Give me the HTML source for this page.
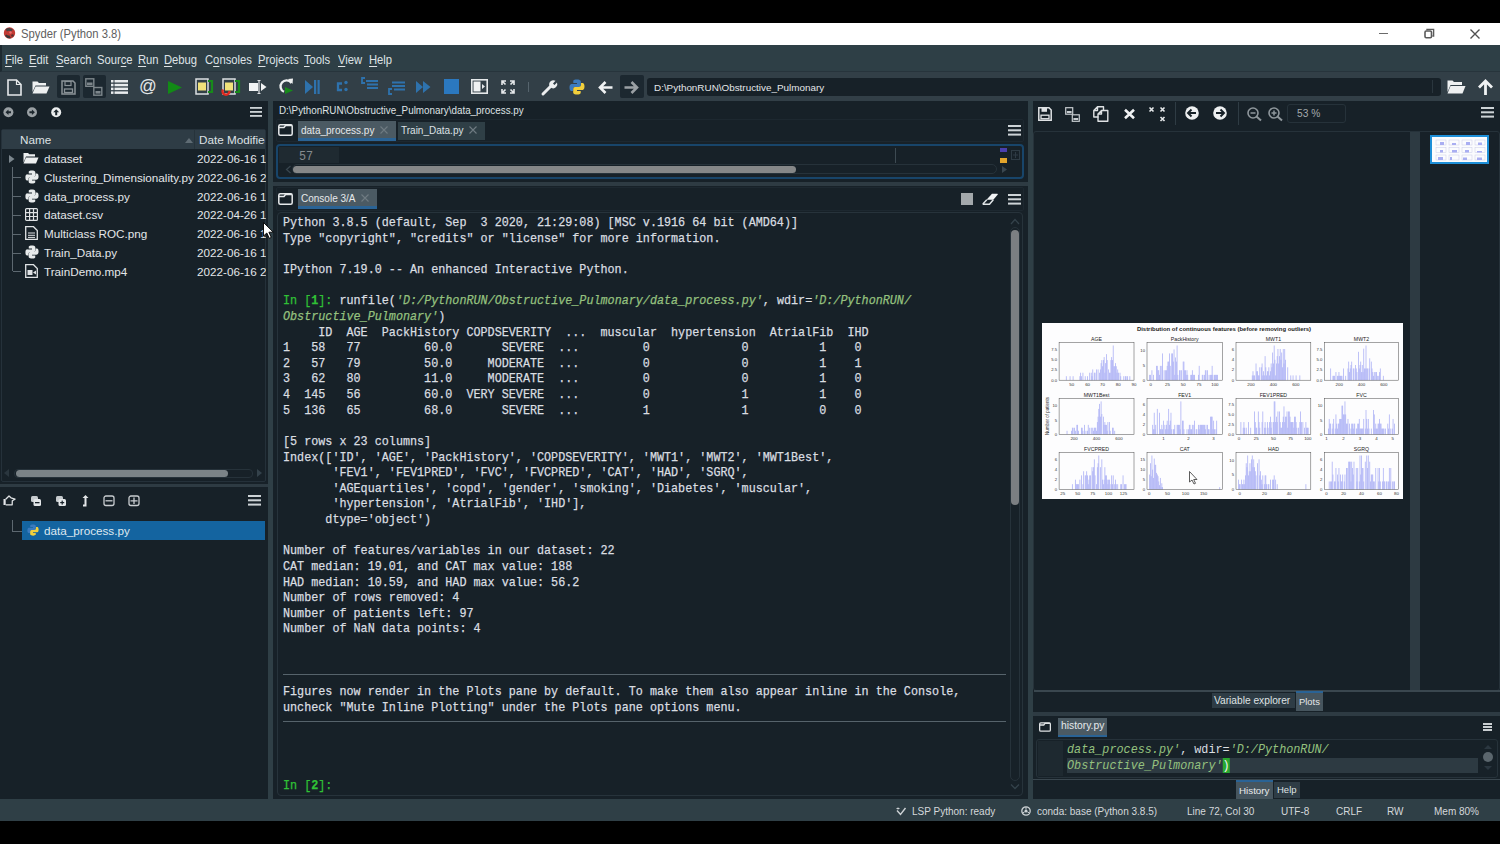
<!DOCTYPE html>
<html><head><meta charset="utf-8">
<style>
*{margin:0;padding:0;box-sizing:border-box}
html,body{width:1500px;height:844px;overflow:hidden;background:#000}
body{position:relative;font-family:"Liberation Sans",sans-serif;color:#e0e3e5}
.a{position:absolute}
.t{position:absolute;white-space:pre;line-height:1}
.m{font-family:"Liberation Mono",monospace}
svg{position:absolute;overflow:visible}
.u{text-decoration:underline;text-underline-offset:2px}
.menu{top:53.5px;font-size:12.8px;color:#dfe3e6;transform:scaleX(0.878);transform-origin:0 0}
.con{position:absolute;left:283px;white-space:pre;font-family:"Liberation Mono",monospace;font-size:13.4px;line-height:15.62px;color:#dadee1;transform:scaleX(0.878);transform-origin:0 0;-webkit-text-stroke:0.25px currentColor}
.g{color:#30c236}
.gb{color:#30c236;font-weight:bold}
.s{color:#95c17f;font-style:italic}
.tree{font-size:11.7px;color:#e3e6e8}
.sb{font-size:10.5px;color:#dfe2e4;top:805px}
</style></head><body><div id="wrap" style="position:absolute;left:0;top:0;width:1500px;height:844px">
<!-- ===== title bar ===== -->
<div class="a" style="left:0;top:23px;width:1500px;height:22px;background:#fff"></div>
<svg style="left:3px;top:27px" width="13" height="12" viewBox="0 0 13 12"><circle cx="6.5" cy="6" r="5.7" fill="#c23a33"/><path d="M2.5 2.2Q6 -0.5 10 2.5L8 4.5Q6 3 4 4.5Z" fill="#4a4444"/><path d="M2 8.5Q4 12 8 11.2L6.5 8.5Q4.5 8.8 3.5 7.5Z" fill="#3a3838"/><circle cx="9.5" cy="8.5" r="1.3" fill="#5a3030"/><circle cx="7.5" cy="5.5" r="1.2" fill="#e87070"/></svg>
<div class="t" style="left:21px;top:28px;font-size:12.5px;color:#606060;transform:scaleX(0.9);transform-origin:0 0">Spyder (Python 3.8)</div>
<div class="a" style="left:1379px;top:32.5px;width:9px;height:1.6px;background:#6a6a6a"></div>
<svg style="left:1424px;top:28px" width="11" height="11" viewBox="0 0 11 11"><rect x="1" y="3" width="6.5" height="6.8" rx="1.2" fill="none" stroke="#5a5a5a" stroke-width="1.6"/><path d="M3 2.2V1.4H9.6V8H8.4" fill="none" stroke="#5a5a5a" stroke-width="1.4"/></svg>
<svg style="left:1470px;top:29px" width="10" height="10" viewBox="0 0 10 10"><path d="M0.5 0.5L9.5 9.5M9.5 0.5L0.5 9.5" stroke="#505050" stroke-width="1.4"/></svg>

<!-- ===== menu bar ===== -->
<div class="a" style="left:0;top:45px;width:1500px;height:27px;background:#2e3f46;border-left:2px solid #1e2a31;border-bottom:1px solid #27343c"></div>
<div class="t menu" style="left:5px"><span class="u">F</span>ile</div>
<div class="t menu" style="left:29px"><span class="u">E</span>dit</div>
<div class="t menu" style="left:56px"><span class="u">S</span>earch</div>
<div class="t menu" style="left:97px">Sour<span class="u">c</span>e</div>
<div class="t menu" style="left:138px"><span class="u">R</span>un</div>
<div class="t menu" style="left:164px"><span class="u">D</span>ebug</div>
<div class="t menu" style="left:205px">C<span class="u">o</span>nsoles</div>
<div class="t menu" style="left:258px"><span class="u">P</span>rojects</div>
<div class="t menu" style="left:304px"><span class="u">T</span>ools</div>
<div class="t menu" style="left:338px"><span class="u">V</span>iew</div>
<div class="t menu" style="left:369px"><span class="u">H</span>elp</div>

<!-- ===== toolbar ===== -->
<div class="a" style="left:0;top:72px;width:1500px;height:29px;background:#323f47"></div>
<!-- new file -->
<svg style="left:7px;top:79px" width="15" height="17" viewBox="0 0 15 17"><path d="M1 1H9.5L14 5.5V16H1Z" fill="none" stroke="#e6e9eb" stroke-width="1.6"/><path d="M9.5 1V5.5H14" fill="none" stroke="#e6e9eb" stroke-width="1.2"/></svg>
<!-- open -->
<svg style="left:32px;top:80px" width="18" height="14" viewBox="0 0 18 14"><path d="M0.5 1.5H5.5L7 3H14V5.5H3.5L0.5 12Z" fill="#eef0f1"/><path d="M3.5 6.5H17.5L14.5 13.5H0.5Z" fill="#eef0f1"/></svg>
<!-- save buttons (pressed bg) -->
<div class="a" style="left:57px;top:75px;width:23px;height:23px;background:#1c2830;border-radius:2px"></div>
<div class="a" style="left:83px;top:75px;width:23px;height:23px;background:#1c2830;border-radius:2px"></div>
<svg style="left:61px;top:80px" width="15" height="15" viewBox="0 0 15 15"><path d="M1 1H12L14 3V14H1Z" fill="none" stroke="#8a9297" stroke-width="1.5"/><rect x="4" y="1.5" width="6" height="4" fill="none" stroke="#8a9297" stroke-width="1.2"/><rect x="3.5" y="9" width="8" height="3.5" fill="none" stroke="#8a9297" stroke-width="1.3"/></svg>
<svg style="left:85px;top:78px" width="18" height="18" viewBox="0 0 18 18"><rect x="0.8" y="0.8" width="8" height="7.5" fill="none" stroke="#7d868b" stroke-width="1.4"/><rect x="2" y="4.5" width="5.5" height="2.5" fill="#7d868b"/><rect x="8.8" y="9.5" width="8" height="7.7" fill="none" stroke="#7d868b" stroke-width="1.4"/><rect x="10.5" y="13" width="5" height="2.6" fill="#7d868b"/></svg>
<!-- list -->
<svg style="left:111px;top:80px" width="17" height="14" viewBox="0 0 17 14"><g fill="#e9ecee"><rect x="0" y="0" width="2.5" height="2.5"/><rect x="3.5" y="0" width="13.5" height="2.5"/><rect x="0" y="3.8" width="2.5" height="2.5"/><rect x="3.5" y="3.8" width="13.5" height="2.5"/><rect x="0" y="7.6" width="2.5" height="2.5"/><rect x="3.5" y="7.6" width="13.5" height="2.5"/><rect x="0" y="11.4" width="2.5" height="2.5"/><rect x="3.5" y="11.4" width="13.5" height="2.5"/></g></svg>
<!-- @ -->
<div class="t" style="left:139px;top:78px;font-size:17.5px;color:#e3e6e8">@</div>
<!-- run -->
<svg style="left:168px;top:81px" width="14" height="13" viewBox="0 0 14 13"><path d="M0 0L14 6.5L0 13Z" fill="#128a16"/></svg>
<!-- run cell -->
<svg style="left:195px;top:78px" width="18" height="17" viewBox="0 0 18 17"><rect x="1" y="1" width="12" height="15" fill="none" stroke="#dde1e3" stroke-width="1.5"/><rect x="3" y="4.5" width="8" height="8" fill="#f0e27a"/><path d="M13 3H17V14H13" fill="none" stroke="#178a1a" stroke-width="2.2"/></svg>
<!-- run cell advance -->
<svg style="left:222px;top:78px" width="18" height="17" viewBox="0 0 18 17"><rect x="1" y="1" width="12" height="15" fill="none" stroke="#dde1e3" stroke-width="1.5"/><rect x="3" y="4.5" width="8" height="8" fill="#f0e27a"/><path d="M13 3H17V14H13" fill="none" stroke="#178a1a" stroke-width="2.2"/><path d="M1 11.5A3.5 3.5 0 1 0 7.5 13" fill="none" stroke="#e02b20" stroke-width="2.4"/></svg>
<!-- run selection -->
<svg style="left:249px;top:80px" width="18" height="14" viewBox="0 0 18 14"><rect x="0" y="3" width="9" height="8" fill="#f2f4f5"/><path d="M10 0.5V13.5M8.5 0.5H11.5M8.5 13.5H11.5" stroke="#dfe2e4" stroke-width="1.2"/><path d="M12 3L17.5 7L12 11Z" fill="#f2f4f5"/></svg>
<!-- rerun -->
<svg style="left:278px;top:78px" width="17" height="16" viewBox="0 0 17 16"><path d="M13.5 5A6 6 0 1 0 6 13.8" fill="none" stroke="#eef0f1" stroke-width="2.3"/><path d="M10 1L15 0.5L14.5 6Z" fill="#eef0f1"/><path d="M7 9L15 12.5L7 16Z" fill="#178a1a"/></svg>
<!-- debug -->
<svg style="left:305px;top:80px" width="15" height="14" viewBox="0 0 15 14"><path d="M0 0L8 7L0 14Z" fill="#2e72ad"/><rect x="9" y="0" width="2.2" height="14" fill="#2e72ad"/><rect x="12.5" y="0" width="2.2" height="14" fill="#2e72ad"/></svg>
<!-- c: -->
<svg style="left:336px;top:80px" width="12" height="12" viewBox="0 0 12 12"><path d="M6 3.5H2V10H6" fill="none" stroke="#2e72ad" stroke-width="2.3"/><circle cx="10" cy="2.5" r="1.7" fill="#2e72ad"/><circle cx="10" cy="9.5" r="1.7" fill="#2e72ad"/></svg>
<!-- c= sup -->
<svg style="left:361px;top:77px" width="17" height="14" viewBox="0 0 17 14"><path d="M4 1H1V6H4" fill="none" stroke="#2e72ad" stroke-width="1.8"/><g fill="#2e72ad"><rect x="5" y="3" width="12" height="2"/><rect x="6" y="6.5" width="11" height="2"/><rect x="6" y="10" width="11" height="2"/></g></svg>
<!-- c= sub -->
<svg style="left:388px;top:81px" width="17" height="14" viewBox="0 0 17 14"><path d="M4 8H1V13H4" fill="none" stroke="#2e72ad" stroke-width="1.8"/><g fill="#2e72ad"><rect x="4" y="0.5" width="13" height="2"/><rect x="4" y="4" width="13" height="2"/><rect x="6" y="7.5" width="11" height="2"/></g></svg>
<!-- >> -->
<svg style="left:416px;top:81px" width="15" height="12" viewBox="0 0 15 12"><path d="M0 0L7 6L0 12Z M7 0L14.5 6L7 12Z" fill="#2e72ad"/></svg>
<!-- stop -->
<div class="a" style="left:444px;top:79px;width:15px;height:15px;background:#2b78bf"></div>
<!-- maximize -->
<svg style="left:471px;top:79px" width="17" height="15" viewBox="0 0 17 15"><rect x="0.8" y="0.8" width="15.4" height="13.4" fill="none" stroke="#e6e9eb" stroke-width="1.6"/><rect x="2.5" y="2.5" width="7" height="10" fill="#f0f2f3"/><path d="M11 5L14 7.5L11 10Z" fill="#e6e9eb"/></svg>
<!-- fullscreen -->
<svg style="left:501px;top:80px" width="14" height="14" viewBox="0 0 14 14"><g fill="none" stroke="#e6e9eb" stroke-width="1.6"><path d="M1 5V1H5M1 1L4.5 4.5"/><path d="M9 1H13V5M13 1L9.5 4.5"/><path d="M1 9V13H5M1 13L4.5 9.5"/><path d="M13 9V13H9M13 13L9.5 9.5"/></g></svg>
<div class="a" style="left:528px;top:82px;width:1px;height:10px;background:#56646d"></div>
<!-- wrench -->
<svg style="left:541px;top:79px" width="17" height="17" viewBox="0 0 17 17"><path d="M2 15L9.5 7.5" stroke="#eceeef" stroke-width="3" stroke-linecap="round"/><path d="M8.5 7A4.2 4.2 0 0 1 14.5 1.8L12 4.5L13.5 6L16 3.5A4.2 4.2 0 0 1 10.5 9Z" fill="#eceeef"/></svg>
<!-- python -->
<svg style="left:569px;top:79px" width="16" height="16" viewBox="0 0 16 16"><path d="M7.8 0.5C4 0.5 4.3 2.2 4.3 2.2V4H8V5H2.8C2.8 5 0.5 4.8 0.5 8.5C0.5 12.2 2.5 12 2.5 12H4V10.2C4 10.2 4 8 6.2 8H9.8C9.8 8 11.8 8 11.8 6V2.6C11.8 2.6 12 0.5 7.8 0.5Z" fill="#3b7bbf"/><path d="M8.2 15.5C12 15.5 11.7 13.8 11.7 13.8V12H8V11H13.2C13.2 11 15.5 11.2 15.5 7.5C15.5 3.8 13.5 4 13.5 4H12V5.8C12 5.8 12 8 9.8 8H6.2C6.2 8 4.2 8 4.2 10V13.4C4.2 13.4 4 15.5 8.2 15.5Z" fill="#f2cf3c"/></svg>
<!-- back arrow -->
<svg style="left:598px;top:81px" width="15" height="13" viewBox="0 0 15 13"><path d="M14.5 6.5H3M7.5 1L2 6.5L7.5 12" fill="none" stroke="#f0f2f3" stroke-width="2.6"/></svg>
<!-- fwd button -->
<div class="a" style="left:620px;top:75px;width:24px;height:23px;background:#1c2830;border-radius:2px"></div>
<svg style="left:624px;top:81px" width="15" height="13" viewBox="0 0 15 13"><path d="M0.5 6.5H12M7.5 1L13 6.5L7.5 12" fill="none" stroke="#9aa0a4" stroke-width="2.6"/></svg>
<!-- path combo -->
<div class="a" style="left:647px;top:78px;width:794px;height:18px;background:#172128;border-radius:3px"></div>
<div class="a" style="left:1432px;top:80px;width:1px;height:13px;background:#2a363e"></div>
<div class="t" style="left:654px;top:82.5px;font-size:9.9px;color:#e3e6e8">D:\PythonRUN\Obstructive_Pulmonary</div>
<!-- open folder right -->
<svg style="left:1447px;top:79px" width="19" height="15" viewBox="0 0 19 15"><path d="M0.5 1.5H5.5L7 3H15V6H3.5L0.5 13Z" fill="#eef0f1"/><path d="M3.5 7H18.5L15.5 14.5H0.5Z" fill="#eef0f1"/></svg>
<!-- up arrow -->
<svg style="left:1477px;top:79px" width="17" height="16" viewBox="0 0 17 16"><path d="M8.5 16V3M2 8.5L8.5 2L15 8.5" fill="none" stroke="#f0f2f3" stroke-width="2.8"/></svg>


<!-- ===== main ===== -->
<div class="a" style="left:0;top:101px;width:1500px;height:699px;background:#172128"></div>
<div class="a" style="left:268px;top:101px;width:5px;height:699px;background:#2f3f46"></div>
<div class="a" style="left:1028px;top:101px;width:5px;height:699px;background:#2f3f46"></div>
<!-- files toolbar -->
<svg style="left:3px;top:106.5px" width="60" height="11" viewBox="0 0 60 11"><circle cx="5.4" cy="5.3" r="5" fill="#9aa0a4"/><circle cx="29" cy="5.3" r="5" fill="#9aa0a4"/><circle cx="53.2" cy="5.3" r="5" fill="#eceeef"/><path d="M2.5 5.3L5.5 2.5V4.3H8V6.3H5.5V8.1Z M31.9 5.3L28.9 2.5V4.3H26.4V6.3H28.9V8.1Z" fill="#1c262d"/><path d="M53.2 2.3L56.2 5.3H54.2V8.3H52.2V5.3H50.2Z" fill="#1c262d"/></svg>
<svg style="left:250px;top:107px" width="12" height="10" viewBox="0 0 12 10"><g fill="#cdd3d6"><rect y="0" width="12" height="1.8"/><rect y="4" width="12" height="1.8"/><rect y="8" width="12" height="1.8"/></g></svg>
<!-- tree frame -->
<div class="a" style="left:1px;top:129px;width:265px;height:353px;border:1px solid #25313a;border-radius:2px"></div>
<div class="a" style="left:2px;top:130px;width:263px;height:19px;background:#2e3c45"></div>
<div class="a" style="left:194px;top:130px;width:1px;height:19px;background:#26333b"></div>
<div class="t tree" style="left:20px;top:134px;font-size:11.7px;color:#dde1e4">Name</div>
<svg style="left:185px;top:138px" width="8" height="5" viewBox="0 0 8 5"><path d="M0 5L4 0L8 5Z" fill="#5f6c74"/></svg>
<div class="a" style="left:197px;top:130px;width:68px;height:19px;overflow:hidden"><div class="t tree" style="left:2px;top:4px;color:#dde1e4">Date Modified</div></div>
<!-- rows -->
<svg style="left:9px;top:155px" width="6" height="8" viewBox="0 0 6 8"><path d="M0 0L5.5 4L0 8Z" fill="#7c878e"/></svg>
<svg style="left:23px;top:152px" width="16" height="12" viewBox="0 0 16 12"><path d="M0.5 1H5L6.3 2.3H12V4.5H3L0.5 10.5Z" fill="#eef0f1"/><path d="M3 5.5H15.5L13 11.5H0.5Z" fill="#eef0f1"/></svg>
<div class="a" style="left:12px;top:167px;width:1px;height:104px;background:#5d6870"></div>
<div class="a" style="left:13px;top:177px;width:8px;height:1px;background:#5d6870"></div>
<div class="a" style="left:13px;top:196px;width:8px;height:1px;background:#5d6870"></div>
<div class="a" style="left:13px;top:215px;width:8px;height:1px;background:#5d6870"></div>
<div class="a" style="left:13px;top:234px;width:8px;height:1px;background:#5d6870"></div>
<div class="a" style="left:13px;top:253px;width:8px;height:1px;background:#5d6870"></div>
<div class="a" style="left:13px;top:271px;width:8px;height:1px;background:#5d6870"></div>
<svg style="left:25px;top:170px" width="14" height="14" viewBox="0 0 16 16"><path d="M7.8 0.5C4 0.5 4.3 2.2 4.3 2.2V4H8V5H2.8C2.8 5 0.5 4.8 0.5 8.5C0.5 12.2 2.5 12 2.5 12H4V10.2C4 10.2 4 8 6.2 8H9.8C9.8 8 11.8 8 11.8 6V2.6C11.8 2.6 12 0.5 7.8 0.5Z" fill="#e8ebec"/><path d="M8.2 15.5C12 15.5 11.7 13.8 11.7 13.8V12H8V11H13.2C13.2 11 15.5 11.2 15.5 7.5C15.5 3.8 13.5 4 13.5 4H12V5.8C12 5.8 12 8 9.8 8H6.2C6.2 8 4.2 8 4.2 10V13.4C4.2 13.4 4 15.5 8.2 15.5Z" fill="#e8ebec"/></svg>
<svg style="left:25px;top:189px" width="14" height="14" viewBox="0 0 16 16"><path d="M7.8 0.5C4 0.5 4.3 2.2 4.3 2.2V4H8V5H2.8C2.8 5 0.5 4.8 0.5 8.5C0.5 12.2 2.5 12 2.5 12H4V10.2C4 10.2 4 8 6.2 8H9.8C9.8 8 11.8 8 11.8 6V2.6C11.8 2.6 12 0.5 7.8 0.5Z" fill="#e8ebec"/><path d="M8.2 15.5C12 15.5 11.7 13.8 11.7 13.8V12H8V11H13.2C13.2 11 15.5 11.2 15.5 7.5C15.5 3.8 13.5 4 13.5 4H12V5.8C12 5.8 12 8 9.8 8H6.2C6.2 8 4.2 8 4.2 10V13.4C4.2 13.4 4 15.5 8.2 15.5Z" fill="#e8ebec"/></svg>
<svg style="left:25px;top:208px" width="13" height="13" viewBox="0 0 13 13"><g fill="none" stroke="#dfe2e4" stroke-width="1.2"><rect x="0.6" y="0.6" width="11.8" height="11.8" rx="1"/><path d="M0.6 4.6H12.4M0.6 8.5H12.4M4.6 0.6V12.4M8.5 0.6V12.4"/></g></svg>
<svg style="left:25px;top:226px" width="13" height="14" viewBox="0 0 13 14"><path d="M0.7 0.7H8.5L12.3 4.5V13.3H0.7Z" fill="none" stroke="#dfe2e4" stroke-width="1.3"/><path d="M3 7H10M3 9.3H10M3 11.4H10" stroke="#dfe2e4" stroke-width="1"/></svg>
<svg style="left:25px;top:245px" width="14" height="14" viewBox="0 0 16 16"><path d="M7.8 0.5C4 0.5 4.3 2.2 4.3 2.2V4H8V5H2.8C2.8 5 0.5 4.8 0.5 8.5C0.5 12.2 2.5 12 2.5 12H4V10.2C4 10.2 4 8 6.2 8H9.8C9.8 8 11.8 8 11.8 6V2.6C11.8 2.6 12 0.5 7.8 0.5Z" fill="#e8ebec"/><path d="M8.2 15.5C12 15.5 11.7 13.8 11.7 13.8V12H8V11H13.2C13.2 11 15.5 11.2 15.5 7.5C15.5 3.8 13.5 4 13.5 4H12V5.8C12 5.8 12 8 9.8 8H6.2C6.2 8 4.2 8 4.2 10V13.4C4.2 13.4 4 15.5 8.2 15.5Z" fill="#e8ebec"/></svg>
<svg style="left:25px;top:264px" width="13" height="14" viewBox="0 0 13 14"><path d="M0.7 0.7H8.5L12.3 4.5V13.3H0.7Z" fill="none" stroke="#dfe2e4" stroke-width="1.3"/><rect x="2.5" y="6" width="5" height="5" fill="#dfe2e4"/><path d="M8 8.5L11 6.5V10.5Z" fill="#dfe2e4"/></svg>
<div class="a" style="left:0;top:0;width:266px;height:290px;overflow:hidden">
<div class="t tree" style="left:44px;top:153px">dataset</div>
<div class="t tree" style="left:44px;top:172px">Clustering_Dimensionality.py</div>
<div class="t tree" style="left:44px;top:191px">data_process.py</div>
<div class="t tree" style="left:44px;top:209px">dataset.csv</div>
<div class="t tree" style="left:44px;top:228px">Multiclass ROC.png</div>
<div class="t tree" style="left:44px;top:247px">Train_Data.py</div>
<div class="t tree" style="left:44px;top:266px">TrainDemo.mp4</div>
<div class="t tree" style="left:197px;top:153px">2022-06-16 1</div>
<div class="t tree" style="left:197px;top:172px">2022-06-16 2</div>
<div class="t tree" style="left:197px;top:191px">2022-06-16 1</div>
<div class="t tree" style="left:197px;top:209px">2022-04-26 1</div>
<div class="t tree" style="left:197px;top:228px">2022-06-16 1</div>
<div class="t tree" style="left:197px;top:247px">2022-06-16 1</div>
<div class="t tree" style="left:197px;top:266px">2022-06-16 2</div>
</div>
<!-- mouse cursor -->
<svg style="left:263px;top:222px" width="11" height="17" viewBox="0 0 11 17"><path d="M0.5 0.5V14L3.8 11L6.3 16.3L8.3 15.4L5.9 10.2H10.3Z" fill="#fff" stroke="#000" stroke-width="0.9"/></svg>
<!-- h scrollbar -->
<svg style="left:4px;top:469px" width="6" height="8" viewBox="0 0 6 8"><path d="M5 0L0 4L5 8Z" fill="#2a363e"/></svg>
<div class="a" style="left:14px;top:469px;width:239px;height:9px;border:1px solid #26323a;border-radius:4px"></div>
<div class="a" style="left:16px;top:470px;width:212px;height:7px;background:#7b8387;border-radius:4px"></div>
<svg style="left:257px;top:469px" width="6" height="8" viewBox="0 0 6 8"><path d="M0 0L5 4L0 8Z" fill="#34424b"/></svg>
<!-- h splitter -->
<div class="a" style="left:0;top:484px;width:268px;height:3px;background:#2e3b43"></div>
<!-- project toolbar -->
<svg style="left:3px;top:495px" width="140" height="12" viewBox="0 0 140 12"><g fill="#e3e6e8">
<rect x="0.5" y="4" width="2.2" height="6" fill="#e3e6e8"/><path d="M2.7 4.3L6 1L8 2.8L12 4.2L9.3 5.8L9.2 9.8H2.7" fill="none" stroke="#dfe2e4" stroke-width="1.3" stroke-linejoin="round"/>
<rect x="28" y="1" width="7" height="6" rx="1.5" fill="#c6cbce"/><rect x="30.5" y="4" width="7.5" height="7" rx="1.5"/><rect x="32" y="7" width="4.5" height="1.3" fill="#172128"/>
<rect x="53" y="1" width="7" height="6" rx="1.5" fill="#c6cbce"/><rect x="55.5" y="4" width="7.5" height="7" rx="1.5"/><rect x="57.2" y="7" width="4" height="1.2" fill="#172128"/><rect x="58.6" y="5.6" width="1.2" height="4" fill="#172128"/>
<path d="M80 11.5H83.5V3H85.5L82.5 0L79.5 3H81.5V9.5H80Z"/>
</g><g fill="none" stroke="#c9cdd0" stroke-width="1.3"><rect x="101" y="1" width="10" height="9.5" rx="2"/><path d="M102.5 5.8H109.5"/><rect x="126" y="1" width="10" height="9.5" rx="2"/><path d="M127.5 5.8H134.5M131 2.5V9"/></g></svg>
<svg style="left:248px;top:495px" width="13" height="11" viewBox="0 0 13 11"><g fill="#cdd3d6"><rect y="0" width="13" height="2"/><rect y="4.3" width="13" height="2"/><rect y="8.6" width="13" height="2"/></g></svg>
<!-- project tree -->

<div class="a" style="left:12px;top:520px;width:1px;height:11px;background:#5d6870"></div>
<div class="a" style="left:12px;top:531px;width:10px;height:1px;background:#5d6870"></div>
<div class="a" style="left:22px;top:521px;width:243px;height:19px;background:#1464a0"></div>
<svg style="left:27px;top:524px" width="12" height="12" viewBox="0 0 16 16"><path d="M7.8 0.5C4 0.5 4.3 2.2 4.3 2.2V4H8V5H2.8C2.8 5 0.5 4.8 0.5 8.5C0.5 12.2 2.5 12 2.5 12H4V10.2C4 10.2 4 8 6.2 8H9.8C9.8 8 11.8 8 11.8 6V2.6C11.8 2.6 12 0.5 7.8 0.5Z" fill="#3b7bbf"/><path d="M8.2 15.5C12 15.5 11.7 13.8 11.7 13.8V12H8V11H13.2C13.2 11 15.5 11.2 15.5 7.5C15.5 3.8 13.5 4 13.5 4H12V5.8C12 5.8 12 8 9.8 8H6.2C6.2 8 4.2 8 4.2 10V13.4C4.2 13.4 4 15.5 8.2 15.5Z" fill="#f2cf3c"/></svg>
<div class="t tree" style="left:44px;top:525px;color:#dfe8f0">data_process.py</div>

<!-- path label -->
<div class="t" style="left:279px;top:105.6px;font-size:10px;color:#dfe2e4;transform:scaleX(0.985);transform-origin:0 0">D:\PythonRUN\Obstructive_Pulmonary\data_process.py</div>
<!-- editor tabbar -->
<div class="a" style="left:276px;top:119px;width:748px;height:23px;border:1px solid #1d2830;border-radius:2px"></div>
<svg style="left:278px;top:124px" width="15" height="12" viewBox="0 0 15 12"><rect x="0.8" y="0.8" width="13.4" height="10.4" rx="1.5" fill="none" stroke="#e6e9eb" stroke-width="1.5"/><path d="M0.8 3.5H6L7.5 1.5H14" fill="none" stroke="#e6e9eb" stroke-width="1.5"/></svg>
<div class="a" style="left:298px;top:121px;width:98px;height:20px;background:#4b5a63;border-bottom:3px solid #2a6395"></div>
<div class="t" style="left:301px;top:125.5px;font-size:10px;color:#e6e9eb">data_process.py</div>
<svg style="left:380px;top:126px" width="8" height="8" viewBox="0 0 8 8"><path d="M0.5 0.5L7.5 7.5M7.5 0.5L0.5 7.5" stroke="#6f7b82" stroke-width="1.1"/></svg>
<div class="a" style="left:398px;top:122px;width:87px;height:18px;background:#2f3f46"></div>
<div class="t" style="left:401px;top:125.5px;font-size:10px;color:#dde1e4">Train_Data.py</div>
<svg style="left:469px;top:126px" width="8" height="8" viewBox="0 0 8 8"><path d="M0.5 0.5L7.5 7.5M7.5 0.5L0.5 7.5" stroke="#6f7b82" stroke-width="1.1"/></svg>
<svg style="left:1008px;top:125px" width="13" height="11" viewBox="0 0 13 11"><g fill="#cdd3d6"><rect y="0" width="13" height="2"/><rect y="4.3" width="13" height="2"/><rect y="8.6" width="13" height="2"/></g></svg>
<!-- editor -->
<div class="a" style="left:276px;top:144px;width:748px;height:35px;border:2px solid #18456a;border-radius:4px;background:#172128"></div>
<div class="a" style="left:279px;top:147px;width:60px;height:16px;background:#1f2a31"></div>
<div class="t m" style="left:299px;top:149.5px;font-size:13.4px;color:#858b8f;transform:scaleX(0.878);transform-origin:0 0">57</div>
<div class="a" style="left:895px;top:148px;width:1px;height:15px;background:#3d4a52"></div>
<svg style="left:286px;top:166px" width="5" height="7" viewBox="0 0 5 7"><path d="M4.5 0L0.5 3.5L4.5 7" fill="none" stroke="#3a4750" stroke-width="1.2"/></svg>
<div class="a" style="left:292px;top:164px;width:705px;height:10px;border:1px solid #26323a;border-radius:5px"></div>
<div class="a" style="left:293px;top:166px;width:503px;height:7px;background:#858788;border-radius:4px"></div>
<svg style="left:1002px;top:166px" width="5" height="7" viewBox="0 0 5 7"><path d="M0 0L5 3.5L0 7Z" fill="#3a4750"/></svg>
<div class="a" style="left:1000px;top:148px;width:7px;height:4px;background:#4a3fae"></div>
<div class="a" style="left:1000px;top:158px;width:7px;height:5px;background:#e3a52c"></div>
<svg style="left:1011px;top:150px" width="9" height="10" viewBox="0 0 9 10"><rect x="0.5" y="0.5" width="8" height="9" fill="none" stroke="#2e3b44" stroke-width="1"/><path d="M4.5 2V8M2 5H7" stroke="#2e3b44" stroke-width="1"/></svg>
<!-- splitter -->
<div class="a" style="left:273px;top:182px;width:755px;height:4px;background:#2e3b43"></div>
<!-- console tabbar -->
<div class="a" style="left:276px;top:187px;width:748px;height:24px;border:1px solid #1d2830;border-radius:2px"></div>
<svg style="left:278px;top:193px" width="15" height="12" viewBox="0 0 15 12"><rect x="0.8" y="0.8" width="13.4" height="10.4" rx="1.5" fill="none" stroke="#e6e9eb" stroke-width="1.5"/><path d="M0.8 3.5H6L7.5 1.5H14" fill="none" stroke="#e6e9eb" stroke-width="1.5"/></svg>
<div class="a" style="left:298px;top:189px;width:79px;height:20px;background:#4b5a63;border-bottom:3px solid #2a6395"></div>
<div class="t" style="left:301px;top:193.5px;font-size:10px;color:#e6e9eb">Console 3/A</div>
<svg style="left:361px;top:194px" width="8" height="8" viewBox="0 0 8 8"><path d="M0.5 0.5L7.5 7.5M7.5 0.5L0.5 7.5" stroke="#6f7b82" stroke-width="1.1"/></svg>
<div class="a" style="left:961px;top:193px;width:12px;height:12px;background:#a3a8ab"></div>
<svg style="left:982px;top:193px" width="17" height="12" viewBox="0 0 17 12"><path d="M10 0.8H15.2Q16.3 0.8 15.6 1.8L11.3 6.8H4.5Z" fill="#f2f4f5"/><path d="M4.8 6.8L1.3 10.4Q0.8 11.2 1.8 11.2H7.5L11.3 6.8" fill="none" stroke="#dfe3e5" stroke-width="1.5" stroke-linejoin="round"/></svg>
<svg style="left:1008px;top:194px" width="13" height="11" viewBox="0 0 13 11"><g fill="#cdd3d6"><rect y="0" width="13" height="2"/><rect y="4.3" width="13" height="2"/><rect y="8.6" width="13" height="2"/></g></svg>
<!-- console frame -->
<div class="a" style="left:277px;top:212px;width:746px;height:584px;border:1px solid #27333b;border-radius:4px"></div>
<!-- v scrollbar -->
<svg style="left:1011px;top:219px" width="8" height="5" viewBox="0 0 8 5"><path d="M0 5L4 0.5L8 5" fill="none" stroke="#34424b" stroke-width="1.3"/></svg>
<div class="a" style="left:1010px;top:227px;width:10px;height:554px;border:1px solid #26323a;border-radius:5px"></div>
<div class="a" style="left:1011px;top:230px;width:8px;height:275px;background:#7b7f82;border-radius:4px"></div>
<svg style="left:1011px;top:784px" width="8" height="5" viewBox="0 0 8 5"><path d="M0 0.5L4 4.5L8 0.5" fill="none" stroke="#34424b" stroke-width="1.3"/></svg>
<!-- console text -->
<div class="con" style="top:215.2px">Python 3.8.5 (default, Sep  3 2020, 21:29:08) [MSC v.1916 64 bit (AMD64)]
Type "copyright", "credits" or "license" for more information.

IPython 7.19.0 -- An enhanced Interactive Python.

<span class="g">In [</span><span class="gb">1</span><span class="g">]:</span> runfile(<span class="s">'D:/PythonRUN/Obstructive_Pulmonary/data_process.py'</span>, wdir=<span class="s">'D:/PythonRUN/
Obstructive_Pulmonary'</span>)
     ID  AGE  PackHistory COPDSEVERITY  ...  muscular  hypertension  AtrialFib  IHD
1   58   77         60.0       SEVERE  ...         0             0          1    0
2   57   79         50.0     MODERATE  ...         0             0          1    1
3   62   80         11.0     MODERATE  ...         0             0          1    0
4  145   56         60.0  VERY SEVERE  ...         0             1          1    0
5  136   65         68.0       SEVERE  ...         1             1          0    0

[5 rows x 23 columns]
Index(['ID', 'AGE', 'PackHistory', 'COPDSEVERITY', 'MWT1', 'MWT2', 'MWT1Best',
       'FEV1', 'FEV1PRED', 'FVC', 'FVCPRED', 'CAT', 'HAD', 'SGRQ',
       'AGEquartiles', 'copd', 'gender', 'smoking', 'Diabetes', 'muscular',
       'hypertension', 'AtrialFib', 'IHD'],
      dtype='object')

Number of features/variables in our dataset: 22
CAT median: 19.01, and CAT max value: 188
HAD median: 10.59, and HAD max value: 56.2
Number of rows removed: 4
Number of patients left: 97
Number of NaN data points: 4



Figures now render in the Plots pane by default. To make them also appear inline in the Console,
uncheck "Mute Inline Plotting" under the Plots pane options menu.




<span class="g">In [</span><span class="gb">2</span><span class="g">]:</span></div>
<div class="a" style="left:283px;top:674px;width:723px;height:1px;background:#56636b"></div>
<div class="a" style="left:283px;top:721px;width:723px;height:1px;background:#56636b"></div>

<!-- plots toolbar -->
<svg style="left:1038px;top:107px" width="14" height="14" viewBox="0 0 14 14"><path d="M0.8 0.8H11L13.2 3V13.2H0.8Z" fill="none" stroke="#dfe2e4" stroke-width="1.5"/><rect x="3.5" y="1" width="5.5" height="3.8" fill="#dfe2e4"/><rect x="3" y="8.2" width="8" height="3.5" fill="none" stroke="#dfe2e4" stroke-width="1.3"/></svg>
<svg style="left:1065px;top:107px" width="15" height="15" viewBox="0 0 15 15"><rect x="0.7" y="0.7" width="7" height="6.5" fill="none" stroke="#c7ccd0" stroke-width="1.2"/><rect x="1.8" y="4" width="4.8" height="2" fill="#c7ccd0"/><rect x="7.3" y="7.8" width="7" height="6.5" fill="none" stroke="#c7ccd0" stroke-width="1.2"/><rect x="8.4" y="11" width="4.8" height="2" fill="#c7ccd0"/></svg>
<svg style="left:1093px;top:106px" width="16" height="16" viewBox="0 0 16 16"><path d="M4.5 0.8H10.5V4.5M5.5 11H0.8V4.5L4.5 0.8V4.5H0.8" fill="none" stroke="#dfe2e4" stroke-width="1.4" stroke-linejoin="round"/><path d="M8.5 4.5H14.8V15.2H5V8ZM8.5 4.5V8H5" fill="none" stroke="#dfe2e4" stroke-width="1.4" stroke-linejoin="round"/></svg>
<svg style="left:1124px;top:109px" width="11" height="10" viewBox="0 0 11 10"><path d="M1 0.8L10 9.2M10 0.8L1 9.2" stroke="#f0f2f3" stroke-width="2.6"/></svg>
<svg style="left:1149px;top:107px" width="17" height="15" viewBox="0 0 17 15"><path d="M0.5 0.5L4.5 4.5M4.5 0.5L0.5 4.5M11.5 0.5L15.5 4.5M15.5 0.5L11.5 4.5M11.5 10L15.5 14M15.5 10L11.5 14" stroke="#e6e9eb" stroke-width="1.6"/></svg>
<div class="a" style="left:1175px;top:102px;width:1px;height:23px;background:#2f3c44"></div>
<svg style="left:1185px;top:106px" width="14" height="14" viewBox="0 0 14 14"><circle cx="7" cy="7" r="6.8" fill="#eef0f1"/><path d="M3 7H11M6.5 3.5L3 7L6.5 10.5" fill="none" stroke="#172128" stroke-width="1.9"/></svg>
<svg style="left:1213px;top:106px" width="14" height="14" viewBox="0 0 14 14"><circle cx="7" cy="7" r="6.8" fill="#eef0f1"/><path d="M3 7H11M7.5 3.5L11 7L7.5 10.5" fill="none" stroke="#172128" stroke-width="1.9"/></svg>
<div class="a" style="left:1238px;top:102px;width:1px;height:23px;background:#2f3c44"></div>
<svg style="left:1247px;top:107px" width="15" height="14" viewBox="0 0 15 14"><circle cx="6" cy="6" r="5" fill="none" stroke="#8f979c" stroke-width="1.6"/><path d="M3.5 6H8.5" stroke="#8f979c" stroke-width="1.5"/><path d="M9.5 9.5L14 13.5" stroke="#8f979c" stroke-width="2"/></svg>
<svg style="left:1268px;top:107px" width="15" height="14" viewBox="0 0 15 14"><circle cx="6" cy="6" r="5" fill="none" stroke="#8f979c" stroke-width="1.6"/><path d="M3.5 6H8.5M6 3.5V8.5" stroke="#8f979c" stroke-width="1.5"/><path d="M9.5 9.5L14 13.5" stroke="#8f979c" stroke-width="2"/></svg>
<div class="a" style="left:1287px;top:104px;width:59px;height:19px;border:1px solid #26323a;border-radius:3px"></div>
<div class="t" style="left:1297px;top:109px;font-size:10.2px;color:#a3aaae">53 %</div>
<svg style="left:1481px;top:107px" width="13" height="11" viewBox="0 0 13 11"><g fill="#cdd3d6"><rect y="0" width="13" height="2"/><rect y="4.3" width="13" height="2"/><rect y="8.6" width="13" height="2"/></g></svg>
<!-- plot frame -->
<div class="a" style="left:1033px;top:131px;width:467px;height:560px;border:1px solid #26323a;border-radius:3px"></div>
<div class="a" style="left:1410px;top:132px;width:10px;height:558px;background:#2d3a42"></div>
<svg style="left:1042px;top:323px" width="361" height="176" viewBox="1042 323 361 176">
<rect x="1042" y="323" width="361" height="176" fill="#fdfdfe"/>
<text x="1224" y="330.5" font-family="Liberation Sans" font-weight="bold" font-size="5.95" text-anchor="middle" fill="#1a1a1a">Distribution of continuous features (before removing outliers)</text>
<text transform="translate(1048.5,416) rotate(-90)" font-family="Liberation Sans" font-size="4.5" text-anchor="middle" fill="#333">Number of patients</text>
<g fill="#a9aef5"><rect x="1065.90" y="376.19" width="0.76" height="4.01"/><rect x="1069.68" y="376.19" width="0.76" height="4.01"/><rect x="1072.71" y="376.19" width="0.76" height="4.01"/><rect x="1079.52" y="376.19" width="0.76" height="4.01"/><rect x="1080.28" y="372.72" width="0.76" height="7.48"/><rect x="1081.03" y="376.19" width="0.76" height="4.01"/><rect x="1082.55" y="372.72" width="0.76" height="7.48"/><rect x="1084.82" y="376.19" width="0.76" height="4.01"/><rect x="1087.09" y="376.19" width="0.76" height="4.01"/><rect x="1089.36" y="372.72" width="0.76" height="7.48"/><rect x="1090.87" y="372.72" width="0.76" height="7.48"/><rect x="1091.63" y="376.19" width="0.76" height="4.01"/><rect x="1092.39" y="369.42" width="0.76" height="10.78"/><rect x="1093.90" y="372.72" width="0.76" height="7.48"/><rect x="1094.66" y="372.72" width="0.76" height="7.48"/><rect x="1096.17" y="369.42" width="0.76" height="10.78"/><rect x="1097.69" y="369.42" width="0.76" height="10.78"/><rect x="1099.20" y="372.72" width="0.76" height="7.48"/><rect x="1099.96" y="369.42" width="0.76" height="10.78"/><rect x="1100.71" y="363.13" width="0.76" height="17.07"/><rect x="1101.47" y="360.09" width="0.76" height="20.11"/><rect x="1102.23" y="366.24" width="0.76" height="13.96"/><rect x="1102.98" y="360.09" width="0.76" height="20.11"/><rect x="1103.74" y="357.10" width="0.76" height="23.10"/><rect x="1104.50" y="372.72" width="0.76" height="7.48"/><rect x="1105.25" y="363.13" width="0.76" height="17.07"/><rect x="1106.01" y="354.15" width="0.76" height="26.05"/><rect x="1106.77" y="360.09" width="0.76" height="20.11"/><rect x="1108.28" y="369.42" width="0.76" height="10.78"/><rect x="1109.04" y="372.72" width="0.76" height="7.48"/><rect x="1109.79" y="372.72" width="0.76" height="7.48"/><rect x="1110.55" y="360.09" width="0.76" height="20.11"/><rect x="1111.31" y="357.10" width="0.76" height="23.10"/><rect x="1112.07" y="360.09" width="0.76" height="20.11"/><rect x="1112.82" y="345.50" width="0.76" height="34.70"/><rect x="1113.58" y="366.24" width="0.76" height="13.96"/><rect x="1114.34" y="366.24" width="0.76" height="13.96"/><rect x="1115.09" y="363.13" width="0.76" height="17.07"/><rect x="1115.85" y="366.24" width="0.76" height="13.96"/><rect x="1116.61" y="372.72" width="0.76" height="7.48"/><rect x="1117.36" y="369.42" width="0.76" height="10.78"/><rect x="1118.12" y="372.72" width="0.76" height="7.48"/><rect x="1119.63" y="372.72" width="0.76" height="7.48"/><rect x="1120.39" y="376.19" width="0.76" height="4.01"/><rect x="1123.42" y="376.19" width="0.76" height="4.01"/><rect x="1124.93" y="376.19" width="0.76" height="4.01"/><rect x="1125.69" y="376.19" width="0.76" height="4.01"/><rect x="1127.20" y="376.19" width="0.76" height="4.01"/><rect x="1129.47" y="376.19" width="0.76" height="4.01"/></g>
<rect x="1059.1" y="342.5" width="74.90000000000009" height="37.69999999999999" fill="none" stroke="#4a4a4a" stroke-width="0.5"/>
<text x="1096.5" y="340.9" font-family="Liberation Sans" font-size="5.2" text-anchor="middle" fill="#222">AGE</text>
<text x="1071.8" y="385.8" font-family="Liberation Sans" font-size="4.4" text-anchor="middle" fill="#333">50</text>
<text x="1087.6" y="385.8" font-family="Liberation Sans" font-size="4.4" text-anchor="middle" fill="#333">60</text>
<text x="1102.5" y="385.8" font-family="Liberation Sans" font-size="4.4" text-anchor="middle" fill="#333">70</text>
<text x="1118.3" y="385.8" font-family="Liberation Sans" font-size="4.4" text-anchor="middle" fill="#333">80</text>
<text x="1134.0" y="385.8" font-family="Liberation Sans" font-size="4.4" text-anchor="middle" fill="#333">90</text>
<text x="1057.1" y="381.7" font-family="Liberation Sans" font-size="4.2" text-anchor="end" fill="#333">0.0</text>
<text x="1057.1" y="371.3" font-family="Liberation Sans" font-size="4.2" text-anchor="end" fill="#333">2.5</text>
<text x="1057.1" y="361.0" font-family="Liberation Sans" font-size="4.2" text-anchor="end" fill="#333">5.0</text>
<text x="1057.1" y="350.6" font-family="Liberation Sans" font-size="4.2" text-anchor="end" fill="#333">7.5</text>
<g fill="#a9aef5"><rect x="1149.26" y="374.86" width="0.76" height="5.34"/><rect x="1150.02" y="374.86" width="0.76" height="5.34"/><rect x="1151.55" y="370.24" width="0.76" height="9.96"/><rect x="1153.07" y="374.86" width="0.76" height="5.34"/><rect x="1156.12" y="365.85" width="0.76" height="14.35"/><rect x="1156.88" y="365.85" width="0.76" height="14.35"/><rect x="1157.65" y="370.24" width="0.76" height="9.96"/><rect x="1158.41" y="370.24" width="0.76" height="9.96"/><rect x="1159.17" y="374.86" width="0.76" height="5.34"/><rect x="1159.93" y="365.85" width="0.76" height="14.35"/><rect x="1161.46" y="365.85" width="0.76" height="14.35"/><rect x="1162.22" y="353.42" width="0.76" height="26.78"/><rect x="1163.74" y="370.24" width="0.76" height="9.96"/><rect x="1165.27" y="370.24" width="0.76" height="9.96"/><rect x="1166.03" y="370.24" width="0.76" height="9.96"/><rect x="1166.79" y="365.85" width="0.76" height="14.35"/><rect x="1167.55" y="361.60" width="0.76" height="18.60"/><rect x="1168.31" y="361.60" width="0.76" height="18.60"/><rect x="1169.08" y="353.42" width="0.76" height="26.78"/><rect x="1169.84" y="365.85" width="0.76" height="14.35"/><rect x="1171.36" y="353.42" width="0.76" height="26.78"/><rect x="1172.13" y="353.42" width="0.76" height="26.78"/><rect x="1172.89" y="361.60" width="0.76" height="18.60"/><rect x="1173.65" y="349.43" width="0.76" height="30.77"/><rect x="1174.41" y="374.86" width="0.76" height="5.34"/><rect x="1175.17" y="357.47" width="0.76" height="22.73"/><rect x="1175.94" y="361.60" width="0.76" height="18.60"/><rect x="1176.70" y="345.50" width="0.76" height="34.70"/><rect x="1177.46" y="374.86" width="0.76" height="5.34"/><rect x="1178.98" y="370.24" width="0.76" height="9.96"/><rect x="1179.75" y="370.24" width="0.76" height="9.96"/><rect x="1181.27" y="370.24" width="0.76" height="9.96"/><rect x="1182.79" y="361.60" width="0.76" height="18.60"/><rect x="1183.56" y="361.60" width="0.76" height="18.60"/><rect x="1184.32" y="370.24" width="0.76" height="9.96"/><rect x="1185.08" y="370.24" width="0.76" height="9.96"/><rect x="1185.84" y="374.86" width="0.76" height="5.34"/><rect x="1186.61" y="370.24" width="0.76" height="9.96"/><rect x="1187.37" y="374.86" width="0.76" height="5.34"/><rect x="1190.42" y="374.86" width="0.76" height="5.34"/><rect x="1191.18" y="374.86" width="0.76" height="5.34"/><rect x="1191.94" y="370.24" width="0.76" height="9.96"/><rect x="1192.70" y="374.86" width="0.76" height="5.34"/><rect x="1193.46" y="374.86" width="0.76" height="5.34"/><rect x="1194.23" y="374.86" width="0.76" height="5.34"/><rect x="1198.04" y="374.86" width="0.76" height="5.34"/><rect x="1198.80" y="365.85" width="0.76" height="14.35"/><rect x="1201.85" y="374.86" width="0.76" height="5.34"/><rect x="1202.61" y="374.86" width="0.76" height="5.34"/><rect x="1204.13" y="374.86" width="0.76" height="5.34"/><rect x="1204.90" y="370.24" width="0.76" height="9.96"/><rect x="1205.66" y="370.24" width="0.76" height="9.96"/><rect x="1207.18" y="370.24" width="0.76" height="9.96"/><rect x="1208.71" y="374.86" width="0.76" height="5.34"/><rect x="1210.23" y="374.86" width="0.76" height="5.34"/><rect x="1210.99" y="374.86" width="0.76" height="5.34"/><rect x="1211.75" y="365.85" width="0.76" height="14.35"/><rect x="1212.52" y="374.86" width="0.76" height="5.34"/><rect x="1214.04" y="374.86" width="0.76" height="5.34"/><rect x="1214.80" y="374.86" width="0.76" height="5.34"/><rect x="1215.57" y="374.86" width="0.76" height="5.34"/><rect x="1216.33" y="374.86" width="0.76" height="5.34"/><rect x="1217.09" y="374.86" width="0.76" height="5.34"/></g>
<rect x="1147" y="342.5" width="75.40000000000009" height="37.69999999999999" fill="none" stroke="#4a4a4a" stroke-width="0.5"/>
<text x="1184.7" y="340.9" font-family="Liberation Sans" font-size="5.2" text-anchor="middle" fill="#222">PackHistory</text>
<text x="1150.8" y="385.8" font-family="Liberation Sans" font-size="4.4" text-anchor="middle" fill="#333">0</text>
<text x="1167.4" y="385.8" font-family="Liberation Sans" font-size="4.4" text-anchor="middle" fill="#333">25</text>
<text x="1183.2" y="385.8" font-family="Liberation Sans" font-size="4.4" text-anchor="middle" fill="#333">50</text>
<text x="1199.0" y="385.8" font-family="Liberation Sans" font-size="4.4" text-anchor="middle" fill="#333">75</text>
<text x="1214.9" y="385.8" font-family="Liberation Sans" font-size="4.4" text-anchor="middle" fill="#333">100</text>
<text x="1145.0" y="381.7" font-family="Liberation Sans" font-size="4.2" text-anchor="end" fill="#333">0</text>
<text x="1145.0" y="366.7" font-family="Liberation Sans" font-size="4.2" text-anchor="end" fill="#333">5</text>
<text x="1145.0" y="351.7" font-family="Liberation Sans" font-size="4.2" text-anchor="end" fill="#333">10</text>
<g fill="#a9aef5"><rect x="1251.86" y="375.40" width="0.76" height="4.80"/><rect x="1252.62" y="371.24" width="0.76" height="8.96"/><rect x="1253.37" y="375.40" width="0.76" height="4.80"/><rect x="1254.13" y="375.40" width="0.76" height="4.80"/><rect x="1255.64" y="363.48" width="0.76" height="16.72"/><rect x="1256.39" y="371.24" width="0.76" height="8.96"/><rect x="1257.15" y="371.24" width="0.76" height="8.96"/><rect x="1257.91" y="375.40" width="0.76" height="4.80"/><rect x="1258.66" y="375.40" width="0.76" height="4.80"/><rect x="1259.42" y="367.29" width="0.76" height="12.91"/><rect x="1260.93" y="367.29" width="0.76" height="12.91"/><rect x="1261.69" y="363.48" width="0.76" height="16.72"/><rect x="1262.44" y="375.40" width="0.76" height="4.80"/><rect x="1263.20" y="371.24" width="0.76" height="8.96"/><rect x="1263.95" y="375.40" width="0.76" height="4.80"/><rect x="1264.71" y="356.11" width="0.76" height="24.09"/><rect x="1265.46" y="367.29" width="0.76" height="12.91"/><rect x="1266.22" y="375.40" width="0.76" height="4.80"/><rect x="1266.98" y="371.24" width="0.76" height="8.96"/><rect x="1267.73" y="371.24" width="0.76" height="8.96"/><rect x="1268.49" y="367.29" width="0.76" height="12.91"/><rect x="1269.24" y="375.40" width="0.76" height="4.80"/><rect x="1270.00" y="371.24" width="0.76" height="8.96"/><rect x="1270.75" y="363.48" width="0.76" height="16.72"/><rect x="1271.51" y="367.29" width="0.76" height="12.91"/><rect x="1272.27" y="352.52" width="0.76" height="27.68"/><rect x="1273.02" y="363.48" width="0.76" height="16.72"/><rect x="1273.78" y="345.50" width="0.76" height="34.70"/><rect x="1274.53" y="359.76" width="0.76" height="20.44"/><rect x="1275.29" y="375.40" width="0.76" height="4.80"/><rect x="1276.05" y="363.48" width="0.76" height="16.72"/><rect x="1276.80" y="356.11" width="0.76" height="24.09"/><rect x="1277.56" y="348.99" width="0.76" height="31.21"/><rect x="1278.31" y="363.48" width="0.76" height="16.72"/><rect x="1279.07" y="356.11" width="0.76" height="24.09"/><rect x="1279.82" y="348.99" width="0.76" height="31.21"/><rect x="1280.58" y="359.76" width="0.76" height="20.44"/><rect x="1281.34" y="352.52" width="0.76" height="27.68"/><rect x="1282.09" y="367.29" width="0.76" height="12.91"/><rect x="1282.85" y="348.99" width="0.76" height="31.21"/><rect x="1283.60" y="363.48" width="0.76" height="16.72"/><rect x="1284.36" y="348.99" width="0.76" height="31.21"/><rect x="1285.11" y="359.76" width="0.76" height="20.44"/><rect x="1287.38" y="367.29" width="0.76" height="12.91"/><rect x="1290.41" y="375.40" width="0.76" height="4.80"/><rect x="1292.67" y="375.40" width="0.76" height="4.80"/><rect x="1295.70" y="375.40" width="0.76" height="4.80"/><rect x="1299.47" y="375.40" width="0.76" height="4.80"/></g>
<rect x="1236" y="342.5" width="74.79999999999995" height="37.69999999999999" fill="none" stroke="#4a4a4a" stroke-width="0.5"/>
<text x="1273.4" y="340.9" font-family="Liberation Sans" font-size="5.2" text-anchor="middle" fill="#222">MWT1</text>
<text x="1251.0" y="385.8" font-family="Liberation Sans" font-size="4.4" text-anchor="middle" fill="#333">200</text>
<text x="1273.4" y="385.8" font-family="Liberation Sans" font-size="4.4" text-anchor="middle" fill="#333">400</text>
<text x="1295.8" y="385.8" font-family="Liberation Sans" font-size="4.4" text-anchor="middle" fill="#333">600</text>
<text x="1234.0" y="381.7" font-family="Liberation Sans" font-size="4.2" text-anchor="end" fill="#333">0</text>
<text x="1234.0" y="371.3" font-family="Liberation Sans" font-size="4.2" text-anchor="end" fill="#333">2</text>
<text x="1234.0" y="361.0" font-family="Liberation Sans" font-size="4.2" text-anchor="end" fill="#333">4</text>
<text x="1234.0" y="350.6" font-family="Liberation Sans" font-size="4.2" text-anchor="end" fill="#333">6</text>
<g fill="#a9aef5"><rect x="1330.31" y="368.46" width="0.75" height="11.74"/><rect x="1332.56" y="375.83" width="0.75" height="4.37"/><rect x="1333.32" y="375.83" width="0.75" height="4.37"/><rect x="1334.07" y="375.83" width="0.75" height="4.37"/><rect x="1335.57" y="372.05" width="0.75" height="8.15"/><rect x="1337.07" y="375.83" width="0.75" height="4.37"/><rect x="1337.83" y="375.83" width="0.75" height="4.37"/><rect x="1338.58" y="372.05" width="0.75" height="8.15"/><rect x="1339.33" y="375.83" width="0.75" height="4.37"/><rect x="1340.08" y="375.83" width="0.75" height="4.37"/><rect x="1340.83" y="375.83" width="0.75" height="4.37"/><rect x="1341.58" y="375.83" width="0.75" height="4.37"/><rect x="1343.09" y="368.46" width="0.75" height="11.74"/><rect x="1345.34" y="375.83" width="0.75" height="4.37"/><rect x="1347.60" y="368.46" width="0.75" height="11.74"/><rect x="1348.35" y="361.60" width="0.75" height="18.60"/><rect x="1349.10" y="372.05" width="0.75" height="8.15"/><rect x="1349.85" y="368.46" width="0.75" height="11.74"/><rect x="1350.60" y="364.99" width="0.75" height="15.21"/><rect x="1351.35" y="361.60" width="0.75" height="18.60"/><rect x="1352.86" y="368.46" width="0.75" height="11.74"/><rect x="1353.61" y="368.46" width="0.75" height="11.74"/><rect x="1355.11" y="364.99" width="0.75" height="15.21"/><rect x="1355.86" y="368.46" width="0.75" height="11.74"/><rect x="1356.61" y="372.05" width="0.75" height="8.15"/><rect x="1358.12" y="351.81" width="0.75" height="28.39"/><rect x="1358.87" y="368.46" width="0.75" height="11.74"/><rect x="1359.62" y="364.99" width="0.75" height="15.21"/><rect x="1360.37" y="361.60" width="0.75" height="18.60"/><rect x="1361.12" y="372.05" width="0.75" height="8.15"/><rect x="1361.88" y="364.99" width="0.75" height="15.21"/><rect x="1362.63" y="372.05" width="0.75" height="8.15"/><rect x="1363.38" y="348.64" width="0.75" height="31.56"/><rect x="1364.13" y="368.46" width="0.75" height="11.74"/><rect x="1364.88" y="368.46" width="0.75" height="11.74"/><rect x="1365.63" y="345.50" width="0.75" height="34.70"/><rect x="1366.39" y="368.46" width="0.75" height="11.74"/><rect x="1367.14" y="368.46" width="0.75" height="11.74"/><rect x="1368.64" y="368.46" width="0.75" height="11.74"/><rect x="1369.39" y="358.29" width="0.75" height="21.91"/><rect x="1370.89" y="361.60" width="0.75" height="18.60"/><rect x="1371.65" y="368.46" width="0.75" height="11.74"/><rect x="1372.40" y="372.05" width="0.75" height="8.15"/><rect x="1373.15" y="375.83" width="0.75" height="4.37"/><rect x="1373.90" y="372.05" width="0.75" height="8.15"/><rect x="1375.40" y="372.05" width="0.75" height="8.15"/><rect x="1376.16" y="372.05" width="0.75" height="8.15"/><rect x="1376.91" y="375.83" width="0.75" height="4.37"/><rect x="1378.41" y="375.83" width="0.75" height="4.37"/><rect x="1379.16" y="372.05" width="0.75" height="8.15"/><rect x="1379.91" y="368.46" width="0.75" height="11.74"/><rect x="1382.92" y="375.83" width="0.75" height="4.37"/></g>
<rect x="1324.3" y="342.5" width="74.40000000000009" height="37.69999999999999" fill="none" stroke="#4a4a4a" stroke-width="0.5"/>
<text x="1361.5" y="340.9" font-family="Liberation Sans" font-size="5.2" text-anchor="middle" fill="#222">MWT2</text>
<text x="1339.2" y="385.8" font-family="Liberation Sans" font-size="4.4" text-anchor="middle" fill="#333">200</text>
<text x="1361.5" y="385.8" font-family="Liberation Sans" font-size="4.4" text-anchor="middle" fill="#333">400</text>
<text x="1383.8" y="385.8" font-family="Liberation Sans" font-size="4.4" text-anchor="middle" fill="#333">600</text>
<text x="1322.3" y="381.7" font-family="Liberation Sans" font-size="4.2" text-anchor="end" fill="#333">0.0</text>
<text x="1322.3" y="371.3" font-family="Liberation Sans" font-size="4.2" text-anchor="end" fill="#333">2.5</text>
<text x="1322.3" y="361.0" font-family="Liberation Sans" font-size="4.2" text-anchor="end" fill="#333">5.0</text>
<text x="1322.3" y="350.6" font-family="Liberation Sans" font-size="4.2" text-anchor="end" fill="#333">7.5</text>
<g fill="#a9aef5"><rect x="1066.65" y="430.78" width="0.76" height="3.52"/><rect x="1071.20" y="430.78" width="0.76" height="3.52"/><rect x="1071.95" y="427.74" width="0.76" height="6.56"/><rect x="1072.71" y="427.74" width="0.76" height="6.56"/><rect x="1074.22" y="427.74" width="0.76" height="6.56"/><rect x="1074.98" y="430.78" width="0.76" height="3.52"/><rect x="1076.49" y="424.85" width="0.76" height="9.45"/><rect x="1077.25" y="424.85" width="0.76" height="9.45"/><rect x="1078.01" y="430.78" width="0.76" height="3.52"/><rect x="1081.03" y="427.74" width="0.76" height="6.56"/><rect x="1081.79" y="427.74" width="0.76" height="6.56"/><rect x="1082.55" y="430.78" width="0.76" height="3.52"/><rect x="1084.06" y="424.85" width="0.76" height="9.45"/><rect x="1085.58" y="430.78" width="0.76" height="3.52"/><rect x="1087.09" y="430.78" width="0.76" height="3.52"/><rect x="1087.85" y="424.85" width="0.76" height="9.45"/><rect x="1089.36" y="427.74" width="0.76" height="6.56"/><rect x="1090.87" y="427.74" width="0.76" height="6.56"/><rect x="1092.39" y="427.74" width="0.76" height="6.56"/><rect x="1093.14" y="430.78" width="0.76" height="3.52"/><rect x="1093.90" y="427.74" width="0.76" height="6.56"/><rect x="1094.66" y="427.74" width="0.76" height="6.56"/><rect x="1095.41" y="427.74" width="0.76" height="6.56"/><rect x="1096.17" y="430.78" width="0.76" height="3.52"/><rect x="1096.93" y="422.06" width="0.76" height="12.24"/><rect x="1097.69" y="416.67" width="0.76" height="17.63"/><rect x="1098.44" y="408.90" width="0.76" height="25.40"/><rect x="1099.20" y="403.88" width="0.76" height="30.42"/><rect x="1099.96" y="416.67" width="0.76" height="17.63"/><rect x="1100.71" y="401.40" width="0.76" height="32.90"/><rect x="1101.47" y="414.05" width="0.76" height="20.25"/><rect x="1102.98" y="416.67" width="0.76" height="17.63"/><rect x="1103.74" y="424.85" width="0.76" height="9.45"/><rect x="1104.50" y="422.06" width="0.76" height="12.24"/><rect x="1105.25" y="424.85" width="0.76" height="9.45"/><rect x="1106.01" y="424.85" width="0.76" height="9.45"/><rect x="1106.77" y="430.78" width="0.76" height="3.52"/><rect x="1107.52" y="422.06" width="0.76" height="12.24"/><rect x="1109.04" y="422.06" width="0.76" height="12.24"/><rect x="1109.79" y="430.78" width="0.76" height="3.52"/><rect x="1112.07" y="427.74" width="0.76" height="6.56"/><rect x="1112.82" y="427.74" width="0.76" height="6.56"/><rect x="1114.34" y="430.78" width="0.76" height="3.52"/></g>
<rect x="1059.1" y="398.4" width="74.90000000000009" height="35.900000000000034" fill="none" stroke="#4a4a4a" stroke-width="0.5"/>
<text x="1096.5" y="396.8" font-family="Liberation Sans" font-size="5.2" text-anchor="middle" fill="#222">MWT1Best</text>
<text x="1074.1" y="439.9" font-family="Liberation Sans" font-size="4.4" text-anchor="middle" fill="#333">200</text>
<text x="1096.5" y="439.9" font-family="Liberation Sans" font-size="4.4" text-anchor="middle" fill="#333">400</text>
<text x="1119.0" y="439.9" font-family="Liberation Sans" font-size="4.4" text-anchor="middle" fill="#333">600</text>
<text x="1057.1" y="435.8" font-family="Liberation Sans" font-size="4.2" text-anchor="end" fill="#333">0</text>
<text x="1057.1" y="421.6" font-family="Liberation Sans" font-size="4.2" text-anchor="end" fill="#333">5</text>
<text x="1057.1" y="407.4" font-family="Liberation Sans" font-size="4.2" text-anchor="end" fill="#333">10</text>
<g fill="#a9aef5"><rect x="1152.31" y="424.85" width="0.76" height="9.45"/><rect x="1153.07" y="429.24" width="0.76" height="5.06"/><rect x="1153.83" y="412.75" width="0.76" height="21.55"/><rect x="1154.60" y="429.24" width="0.76" height="5.06"/><rect x="1155.36" y="424.85" width="0.76" height="9.45"/><rect x="1156.88" y="408.90" width="0.76" height="25.40"/><rect x="1159.17" y="412.75" width="0.76" height="21.55"/><rect x="1159.93" y="429.24" width="0.76" height="5.06"/><rect x="1160.69" y="429.24" width="0.76" height="5.06"/><rect x="1161.46" y="424.85" width="0.76" height="9.45"/><rect x="1162.22" y="429.24" width="0.76" height="5.06"/><rect x="1162.98" y="420.69" width="0.76" height="13.61"/><rect x="1164.50" y="424.85" width="0.76" height="9.45"/><rect x="1165.27" y="429.24" width="0.76" height="5.06"/><rect x="1166.03" y="424.85" width="0.76" height="9.45"/><rect x="1166.79" y="420.69" width="0.76" height="13.61"/><rect x="1167.55" y="429.24" width="0.76" height="5.06"/><rect x="1168.31" y="408.90" width="0.76" height="25.40"/><rect x="1169.08" y="424.85" width="0.76" height="9.45"/><rect x="1169.84" y="420.69" width="0.76" height="13.61"/><rect x="1170.60" y="412.75" width="0.76" height="21.55"/><rect x="1171.36" y="429.24" width="0.76" height="5.06"/><rect x="1172.89" y="429.24" width="0.76" height="5.06"/><rect x="1173.65" y="429.24" width="0.76" height="5.06"/><rect x="1174.41" y="424.85" width="0.76" height="9.45"/><rect x="1176.70" y="424.85" width="0.76" height="9.45"/><rect x="1177.46" y="424.85" width="0.76" height="9.45"/><rect x="1178.22" y="424.85" width="0.76" height="9.45"/><rect x="1178.98" y="424.85" width="0.76" height="9.45"/><rect x="1179.75" y="429.24" width="0.76" height="5.06"/><rect x="1180.51" y="401.40" width="0.76" height="32.90"/><rect x="1182.03" y="420.69" width="0.76" height="13.61"/><rect x="1182.79" y="420.69" width="0.76" height="13.61"/><rect x="1183.56" y="429.24" width="0.76" height="5.06"/><rect x="1186.61" y="429.24" width="0.76" height="5.06"/><rect x="1188.13" y="429.24" width="0.76" height="5.06"/><rect x="1188.89" y="424.85" width="0.76" height="9.45"/><rect x="1189.65" y="424.85" width="0.76" height="9.45"/><rect x="1190.42" y="429.24" width="0.76" height="5.06"/><rect x="1191.18" y="429.24" width="0.76" height="5.06"/><rect x="1191.94" y="424.85" width="0.76" height="9.45"/><rect x="1193.46" y="424.85" width="0.76" height="9.45"/><rect x="1194.23" y="420.69" width="0.76" height="13.61"/><rect x="1195.75" y="429.24" width="0.76" height="5.06"/><rect x="1196.51" y="429.24" width="0.76" height="5.06"/><rect x="1198.04" y="424.85" width="0.76" height="9.45"/><rect x="1198.80" y="429.24" width="0.76" height="5.06"/><rect x="1199.56" y="424.85" width="0.76" height="9.45"/><rect x="1200.32" y="424.85" width="0.76" height="9.45"/><rect x="1201.09" y="424.85" width="0.76" height="9.45"/><rect x="1201.85" y="424.85" width="0.76" height="9.45"/><rect x="1202.61" y="424.85" width="0.76" height="9.45"/><rect x="1203.37" y="424.85" width="0.76" height="9.45"/><rect x="1204.13" y="424.85" width="0.76" height="9.45"/><rect x="1204.90" y="429.24" width="0.76" height="5.06"/><rect x="1205.66" y="424.85" width="0.76" height="9.45"/><rect x="1207.18" y="424.85" width="0.76" height="9.45"/><rect x="1207.94" y="429.24" width="0.76" height="5.06"/><rect x="1208.71" y="429.24" width="0.76" height="5.06"/><rect x="1210.23" y="416.67" width="0.76" height="17.63"/><rect x="1210.99" y="416.67" width="0.76" height="17.63"/><rect x="1211.75" y="416.67" width="0.76" height="17.63"/><rect x="1212.52" y="429.24" width="0.76" height="5.06"/><rect x="1213.28" y="420.69" width="0.76" height="13.61"/><rect x="1214.04" y="429.24" width="0.76" height="5.06"/><rect x="1215.57" y="429.24" width="0.76" height="5.06"/><rect x="1216.33" y="420.69" width="0.76" height="13.61"/></g>
<rect x="1147" y="398.4" width="75.40000000000009" height="35.900000000000034" fill="none" stroke="#4a4a4a" stroke-width="0.5"/>
<text x="1184.7" y="396.8" font-family="Liberation Sans" font-size="5.2" text-anchor="middle" fill="#222">FEV1</text>
<text x="1163.6" y="439.9" font-family="Liberation Sans" font-size="4.4" text-anchor="middle" fill="#333">1</text>
<text x="1188.5" y="439.9" font-family="Liberation Sans" font-size="4.4" text-anchor="middle" fill="#333">2</text>
<text x="1213.4" y="439.9" font-family="Liberation Sans" font-size="4.4" text-anchor="middle" fill="#333">3</text>
<text x="1145.0" y="435.8" font-family="Liberation Sans" font-size="4.2" text-anchor="end" fill="#333">0</text>
<text x="1145.0" y="426.0" font-family="Liberation Sans" font-size="4.2" text-anchor="end" fill="#333">2</text>
<text x="1145.0" y="416.2" font-family="Liberation Sans" font-size="4.2" text-anchor="end" fill="#333">4</text>
<text x="1145.0" y="406.4" font-family="Liberation Sans" font-size="4.2" text-anchor="end" fill="#333">6</text>
<g fill="#a9aef5"><rect x="1240.52" y="422.06" width="0.76" height="12.24"/><rect x="1242.79" y="427.74" width="0.76" height="6.56"/><rect x="1243.55" y="422.06" width="0.76" height="12.24"/><rect x="1244.30" y="427.74" width="0.76" height="6.56"/><rect x="1245.81" y="427.74" width="0.76" height="6.56"/><rect x="1248.08" y="422.06" width="0.76" height="12.24"/><rect x="1250.35" y="427.74" width="0.76" height="6.56"/><rect x="1254.13" y="411.46" width="0.76" height="22.84"/><rect x="1254.88" y="422.06" width="0.76" height="12.24"/><rect x="1255.64" y="427.74" width="0.76" height="6.56"/><rect x="1256.39" y="427.74" width="0.76" height="6.56"/><rect x="1257.91" y="411.46" width="0.76" height="22.84"/><rect x="1258.66" y="422.06" width="0.76" height="12.24"/><rect x="1259.42" y="427.74" width="0.76" height="6.56"/><rect x="1261.69" y="422.06" width="0.76" height="12.24"/><rect x="1262.44" y="411.46" width="0.76" height="22.84"/><rect x="1263.95" y="427.74" width="0.76" height="6.56"/><rect x="1264.71" y="422.06" width="0.76" height="12.24"/><rect x="1265.46" y="427.74" width="0.76" height="6.56"/><rect x="1266.98" y="422.06" width="0.76" height="12.24"/><rect x="1267.73" y="427.74" width="0.76" height="6.56"/><rect x="1269.24" y="422.06" width="0.76" height="12.24"/><rect x="1270.00" y="416.67" width="0.76" height="17.63"/><rect x="1270.75" y="427.74" width="0.76" height="6.56"/><rect x="1271.51" y="422.06" width="0.76" height="12.24"/><rect x="1273.02" y="422.06" width="0.76" height="12.24"/><rect x="1273.78" y="401.40" width="0.76" height="32.90"/><rect x="1274.53" y="401.40" width="0.76" height="32.90"/><rect x="1275.29" y="422.06" width="0.76" height="12.24"/><rect x="1276.05" y="416.67" width="0.76" height="17.63"/><rect x="1276.80" y="422.06" width="0.76" height="12.24"/><rect x="1277.56" y="411.46" width="0.76" height="22.84"/><rect x="1279.07" y="411.46" width="0.76" height="22.84"/><rect x="1279.82" y="422.06" width="0.76" height="12.24"/><rect x="1280.58" y="427.74" width="0.76" height="6.56"/><rect x="1281.34" y="427.74" width="0.76" height="6.56"/><rect x="1282.09" y="422.06" width="0.76" height="12.24"/><rect x="1282.85" y="416.67" width="0.76" height="17.63"/><rect x="1283.60" y="406.38" width="0.76" height="27.92"/><rect x="1284.36" y="422.06" width="0.76" height="12.24"/><rect x="1285.11" y="416.67" width="0.76" height="17.63"/><rect x="1285.87" y="416.67" width="0.76" height="17.63"/><rect x="1286.63" y="411.46" width="0.76" height="22.84"/><rect x="1287.38" y="427.74" width="0.76" height="6.56"/><rect x="1288.14" y="411.46" width="0.76" height="22.84"/><rect x="1288.89" y="411.46" width="0.76" height="22.84"/><rect x="1289.65" y="416.67" width="0.76" height="17.63"/><rect x="1290.41" y="422.06" width="0.76" height="12.24"/><rect x="1291.16" y="422.06" width="0.76" height="12.24"/><rect x="1291.92" y="422.06" width="0.76" height="12.24"/><rect x="1292.67" y="422.06" width="0.76" height="12.24"/><rect x="1293.43" y="427.74" width="0.76" height="6.56"/><rect x="1294.18" y="416.67" width="0.76" height="17.63"/><rect x="1294.94" y="416.67" width="0.76" height="17.63"/><rect x="1295.70" y="422.06" width="0.76" height="12.24"/><rect x="1296.45" y="427.74" width="0.76" height="6.56"/><rect x="1297.96" y="427.74" width="0.76" height="6.56"/><rect x="1299.47" y="422.06" width="0.76" height="12.24"/><rect x="1300.23" y="411.46" width="0.76" height="22.84"/><rect x="1300.99" y="422.06" width="0.76" height="12.24"/><rect x="1302.50" y="422.06" width="0.76" height="12.24"/><rect x="1304.01" y="427.74" width="0.76" height="6.56"/><rect x="1305.52" y="422.06" width="0.76" height="12.24"/><rect x="1306.28" y="427.74" width="0.76" height="6.56"/><rect x="1307.03" y="427.74" width="0.76" height="6.56"/><rect x="1307.79" y="427.74" width="0.76" height="6.56"/></g>
<rect x="1236" y="398.4" width="74.79999999999995" height="35.900000000000034" fill="none" stroke="#4a4a4a" stroke-width="0.5"/>
<text x="1273.4" y="396.8" font-family="Liberation Sans" font-size="5.2" text-anchor="middle" fill="#222">FEV1PRED</text>
<text x="1239.0" y="439.9" font-family="Liberation Sans" font-size="4.4" text-anchor="middle" fill="#333">0</text>
<text x="1256.2" y="439.9" font-family="Liberation Sans" font-size="4.4" text-anchor="middle" fill="#333">25</text>
<text x="1273.4" y="439.9" font-family="Liberation Sans" font-size="4.4" text-anchor="middle" fill="#333">50</text>
<text x="1290.6" y="439.9" font-family="Liberation Sans" font-size="4.4" text-anchor="middle" fill="#333">75</text>
<text x="1307.8" y="439.9" font-family="Liberation Sans" font-size="4.4" text-anchor="middle" fill="#333">100</text>
<text x="1234.0" y="435.8" font-family="Liberation Sans" font-size="4.2" text-anchor="end" fill="#333">0.0</text>
<text x="1234.0" y="426.0" font-family="Liberation Sans" font-size="4.2" text-anchor="end" fill="#333">2.5</text>
<text x="1234.0" y="416.2" font-family="Liberation Sans" font-size="4.2" text-anchor="end" fill="#333">5.0</text>
<text x="1234.0" y="406.4" font-family="Liberation Sans" font-size="4.2" text-anchor="end" fill="#333">7.5</text>
<g fill="#a9aef5"><rect x="1328.05" y="428.59" width="0.75" height="5.71"/><rect x="1328.81" y="418.95" width="0.75" height="15.35"/><rect x="1329.56" y="423.65" width="0.75" height="10.65"/><rect x="1330.31" y="423.65" width="0.75" height="10.65"/><rect x="1331.81" y="428.59" width="0.75" height="5.71"/><rect x="1332.56" y="423.65" width="0.75" height="10.65"/><rect x="1333.32" y="418.95" width="0.75" height="15.35"/><rect x="1334.82" y="428.59" width="0.75" height="5.71"/><rect x="1335.57" y="414.42" width="0.75" height="19.88"/><rect x="1336.32" y="423.65" width="0.75" height="10.65"/><rect x="1337.07" y="428.59" width="0.75" height="5.71"/><rect x="1337.83" y="423.65" width="0.75" height="10.65"/><rect x="1338.58" y="423.65" width="0.75" height="10.65"/><rect x="1339.33" y="418.95" width="0.75" height="15.35"/><rect x="1340.08" y="418.95" width="0.75" height="15.35"/><rect x="1340.83" y="418.95" width="0.75" height="15.35"/><rect x="1341.58" y="405.66" width="0.75" height="28.64"/><rect x="1342.33" y="405.66" width="0.75" height="28.64"/><rect x="1343.09" y="414.42" width="0.75" height="19.88"/><rect x="1343.84" y="414.42" width="0.75" height="19.88"/><rect x="1344.59" y="401.40" width="0.75" height="32.90"/><rect x="1345.34" y="414.42" width="0.75" height="19.88"/><rect x="1346.09" y="423.65" width="0.75" height="10.65"/><rect x="1346.84" y="423.65" width="0.75" height="10.65"/><rect x="1347.60" y="418.95" width="0.75" height="15.35"/><rect x="1349.10" y="423.65" width="0.75" height="10.65"/><rect x="1350.60" y="428.59" width="0.75" height="5.71"/><rect x="1351.35" y="423.65" width="0.75" height="10.65"/><rect x="1352.11" y="423.65" width="0.75" height="10.65"/><rect x="1352.86" y="428.59" width="0.75" height="5.71"/><rect x="1353.61" y="423.65" width="0.75" height="10.65"/><rect x="1354.36" y="423.65" width="0.75" height="10.65"/><rect x="1355.86" y="428.59" width="0.75" height="5.71"/><rect x="1356.61" y="428.59" width="0.75" height="5.71"/><rect x="1357.37" y="423.65" width="0.75" height="10.65"/><rect x="1358.12" y="423.65" width="0.75" height="10.65"/><rect x="1358.87" y="418.95" width="0.75" height="15.35"/><rect x="1359.62" y="428.59" width="0.75" height="5.71"/><rect x="1360.37" y="428.59" width="0.75" height="5.71"/><rect x="1361.12" y="428.59" width="0.75" height="5.71"/><rect x="1361.88" y="428.59" width="0.75" height="5.71"/><rect x="1362.63" y="428.59" width="0.75" height="5.71"/><rect x="1363.38" y="418.95" width="0.75" height="15.35"/><rect x="1364.88" y="428.59" width="0.75" height="5.71"/><rect x="1365.63" y="410.00" width="0.75" height="24.30"/><rect x="1366.39" y="418.95" width="0.75" height="15.35"/><rect x="1367.14" y="428.59" width="0.75" height="5.71"/><rect x="1367.89" y="418.95" width="0.75" height="15.35"/><rect x="1368.64" y="428.59" width="0.75" height="5.71"/><rect x="1370.89" y="428.59" width="0.75" height="5.71"/><rect x="1373.15" y="410.00" width="0.75" height="24.30"/><rect x="1373.90" y="414.42" width="0.75" height="19.88"/><rect x="1374.65" y="428.59" width="0.75" height="5.71"/><rect x="1375.40" y="423.65" width="0.75" height="10.65"/><rect x="1376.16" y="428.59" width="0.75" height="5.71"/><rect x="1376.91" y="428.59" width="0.75" height="5.71"/><rect x="1377.66" y="423.65" width="0.75" height="10.65"/><rect x="1378.41" y="423.65" width="0.75" height="10.65"/><rect x="1379.16" y="418.95" width="0.75" height="15.35"/><rect x="1379.91" y="423.65" width="0.75" height="10.65"/><rect x="1380.67" y="423.65" width="0.75" height="10.65"/><rect x="1381.42" y="428.59" width="0.75" height="5.71"/><rect x="1382.17" y="428.59" width="0.75" height="5.71"/><rect x="1382.92" y="428.59" width="0.75" height="5.71"/><rect x="1383.67" y="428.59" width="0.75" height="5.71"/><rect x="1385.17" y="428.59" width="0.75" height="5.71"/><rect x="1387.43" y="423.65" width="0.75" height="10.65"/><rect x="1388.18" y="428.59" width="0.75" height="5.71"/><rect x="1388.93" y="414.42" width="0.75" height="19.88"/><rect x="1390.44" y="428.59" width="0.75" height="5.71"/><rect x="1391.94" y="428.59" width="0.75" height="5.71"/><rect x="1392.69" y="418.95" width="0.75" height="15.35"/><rect x="1394.19" y="423.65" width="0.75" height="10.65"/></g>
<rect x="1324.3" y="398.4" width="74.40000000000009" height="35.900000000000034" fill="none" stroke="#4a4a4a" stroke-width="0.5"/>
<text x="1361.5" y="396.8" font-family="Liberation Sans" font-size="5.2" text-anchor="middle" fill="#222">FVC</text>
<text x="1326.5" y="439.9" font-family="Liberation Sans" font-size="4.4" text-anchor="middle" fill="#333">1</text>
<text x="1343.6" y="439.9" font-family="Liberation Sans" font-size="4.4" text-anchor="middle" fill="#333">2</text>
<text x="1360.0" y="439.9" font-family="Liberation Sans" font-size="4.4" text-anchor="middle" fill="#333">3</text>
<text x="1376.4" y="439.9" font-family="Liberation Sans" font-size="4.4" text-anchor="middle" fill="#333">4</text>
<text x="1392.7" y="439.9" font-family="Liberation Sans" font-size="4.4" text-anchor="middle" fill="#333">5</text>
<text x="1322.3" y="435.8" font-family="Liberation Sans" font-size="4.2" text-anchor="end" fill="#333">0</text>
<text x="1322.3" y="421.6" font-family="Liberation Sans" font-size="4.2" text-anchor="end" fill="#333">5</text>
<text x="1322.3" y="407.4" font-family="Liberation Sans" font-size="4.2" text-anchor="end" fill="#333">10</text>
<g fill="#a9aef5"><rect x="1071.95" y="484.18" width="0.76" height="5.22"/><rect x="1074.98" y="479.66" width="0.76" height="9.74"/><rect x="1075.74" y="484.18" width="0.76" height="5.22"/><rect x="1076.49" y="484.18" width="0.76" height="5.22"/><rect x="1077.25" y="484.18" width="0.76" height="5.22"/><rect x="1078.01" y="484.18" width="0.76" height="5.22"/><rect x="1079.52" y="479.66" width="0.76" height="9.74"/><rect x="1081.03" y="475.38" width="0.76" height="14.02"/><rect x="1082.55" y="484.18" width="0.76" height="5.22"/><rect x="1083.31" y="471.23" width="0.76" height="18.17"/><rect x="1084.82" y="475.38" width="0.76" height="14.02"/><rect x="1085.58" y="475.38" width="0.76" height="14.02"/><rect x="1086.33" y="471.23" width="0.76" height="18.17"/><rect x="1087.09" y="475.38" width="0.76" height="14.02"/><rect x="1087.85" y="484.18" width="0.76" height="5.22"/><rect x="1088.60" y="479.66" width="0.76" height="9.74"/><rect x="1089.36" y="475.38" width="0.76" height="14.02"/><rect x="1090.12" y="475.38" width="0.76" height="14.02"/><rect x="1091.63" y="467.19" width="0.76" height="22.21"/><rect x="1092.39" y="471.23" width="0.76" height="18.17"/><rect x="1093.14" y="467.19" width="0.76" height="22.21"/><rect x="1093.90" y="459.34" width="0.76" height="30.06"/><rect x="1094.66" y="475.38" width="0.76" height="14.02"/><rect x="1096.17" y="484.18" width="0.76" height="5.22"/><rect x="1096.93" y="467.19" width="0.76" height="22.21"/><rect x="1097.69" y="463.23" width="0.76" height="26.17"/><rect x="1098.44" y="455.50" width="0.76" height="33.90"/><rect x="1099.96" y="467.19" width="0.76" height="22.21"/><rect x="1101.47" y="459.34" width="0.76" height="30.06"/><rect x="1102.23" y="479.66" width="0.76" height="9.74"/><rect x="1102.98" y="484.18" width="0.76" height="5.22"/><rect x="1103.74" y="479.66" width="0.76" height="9.74"/><rect x="1104.50" y="467.19" width="0.76" height="22.21"/><rect x="1105.25" y="475.38" width="0.76" height="14.02"/><rect x="1106.01" y="475.38" width="0.76" height="14.02"/><rect x="1106.77" y="479.66" width="0.76" height="9.74"/><rect x="1107.52" y="484.18" width="0.76" height="5.22"/><rect x="1108.28" y="479.66" width="0.76" height="9.74"/><rect x="1109.04" y="479.66" width="0.76" height="9.74"/><rect x="1110.55" y="484.18" width="0.76" height="5.22"/><rect x="1111.31" y="475.38" width="0.76" height="14.02"/><rect x="1112.07" y="484.18" width="0.76" height="5.22"/><rect x="1112.82" y="475.38" width="0.76" height="14.02"/><rect x="1114.34" y="484.18" width="0.76" height="5.22"/><rect x="1115.09" y="479.66" width="0.76" height="9.74"/><rect x="1115.85" y="484.18" width="0.76" height="5.22"/><rect x="1117.36" y="484.18" width="0.76" height="5.22"/><rect x="1120.39" y="484.18" width="0.76" height="5.22"/><rect x="1121.15" y="484.18" width="0.76" height="5.22"/><rect x="1122.66" y="475.38" width="0.76" height="14.02"/><rect x="1124.17" y="484.18" width="0.76" height="5.22"/><rect x="1124.93" y="484.18" width="0.76" height="5.22"/><rect x="1125.69" y="484.18" width="0.76" height="5.22"/></g>
<rect x="1059.1" y="452.5" width="74.90000000000009" height="36.89999999999998" fill="none" stroke="#4a4a4a" stroke-width="0.5"/>
<text x="1096.5" y="450.9" font-family="Liberation Sans" font-size="5.2" text-anchor="middle" fill="#222">FVCPRED</text>
<text x="1062.8" y="495.0" font-family="Liberation Sans" font-size="4.4" text-anchor="middle" fill="#333">25</text>
<text x="1077.8" y="495.0" font-family="Liberation Sans" font-size="4.4" text-anchor="middle" fill="#333">50</text>
<text x="1092.8" y="495.0" font-family="Liberation Sans" font-size="4.4" text-anchor="middle" fill="#333">75</text>
<text x="1108.5" y="495.0" font-family="Liberation Sans" font-size="4.4" text-anchor="middle" fill="#333">100</text>
<text x="1123.5" y="495.0" font-family="Liberation Sans" font-size="4.4" text-anchor="middle" fill="#333">125</text>
<text x="1057.1" y="490.9" font-family="Liberation Sans" font-size="4.2" text-anchor="end" fill="#333">0</text>
<text x="1057.1" y="480.8" font-family="Liberation Sans" font-size="4.2" text-anchor="end" fill="#333">2</text>
<text x="1057.1" y="470.7" font-family="Liberation Sans" font-size="4.2" text-anchor="end" fill="#333">4</text>
<text x="1057.1" y="460.5" font-family="Liberation Sans" font-size="4.2" text-anchor="end" fill="#333">6</text>
<g fill="#a9aef5"><rect x="1149.26" y="474.54" width="0.76" height="14.86"/><rect x="1150.02" y="463.23" width="0.76" height="26.17"/><rect x="1150.79" y="476.22" width="0.76" height="13.18"/><rect x="1151.55" y="455.50" width="0.76" height="33.90"/><rect x="1152.31" y="469.61" width="0.76" height="19.79"/><rect x="1153.07" y="477.93" width="0.76" height="11.47"/><rect x="1153.83" y="458.57" width="0.76" height="30.83"/><rect x="1154.60" y="464.81" width="0.76" height="24.59"/><rect x="1155.36" y="464.81" width="0.76" height="24.59"/><rect x="1156.12" y="472.88" width="0.76" height="16.52"/><rect x="1156.88" y="474.54" width="0.76" height="14.86"/><rect x="1157.65" y="476.22" width="0.76" height="13.18"/><rect x="1158.41" y="481.44" width="0.76" height="7.96"/><rect x="1159.17" y="485.13" width="0.76" height="4.27"/><rect x="1159.93" y="477.93" width="0.76" height="11.47"/><rect x="1160.69" y="487.11" width="0.76" height="2.29"/><rect x="1161.46" y="483.25" width="0.76" height="6.15"/><rect x="1162.22" y="487.11" width="0.76" height="2.29"/><rect x="1219.38" y="487.11" width="0.76" height="2.29"/></g>
<rect x="1147" y="452.5" width="75.40000000000009" height="36.89999999999998" fill="none" stroke="#4a4a4a" stroke-width="0.5"/>
<text x="1184.7" y="450.9" font-family="Liberation Sans" font-size="5.2" text-anchor="middle" fill="#222">CAT</text>
<text x="1149.3" y="495.0" font-family="Liberation Sans" font-size="4.4" text-anchor="middle" fill="#333">0</text>
<text x="1167.4" y="495.0" font-family="Liberation Sans" font-size="4.4" text-anchor="middle" fill="#333">50</text>
<text x="1185.5" y="495.0" font-family="Liberation Sans" font-size="4.4" text-anchor="middle" fill="#333">100</text>
<text x="1203.6" y="495.0" font-family="Liberation Sans" font-size="4.4" text-anchor="middle" fill="#333">150</text>
<text x="1145.0" y="490.9" font-family="Liberation Sans" font-size="4.2" text-anchor="end" fill="#333">0</text>
<text x="1145.0" y="480.8" font-family="Liberation Sans" font-size="4.2" text-anchor="end" fill="#333">5</text>
<text x="1145.0" y="470.7" font-family="Liberation Sans" font-size="4.2" text-anchor="end" fill="#333">10</text>
<text x="1145.0" y="460.5" font-family="Liberation Sans" font-size="4.2" text-anchor="end" fill="#333">15</text>
<g fill="#a9aef5"><rect x="1238.26" y="479.66" width="0.76" height="9.74"/><rect x="1239.01" y="484.18" width="0.76" height="5.22"/><rect x="1239.77" y="484.18" width="0.76" height="5.22"/><rect x="1241.28" y="479.66" width="0.76" height="9.74"/><rect x="1242.03" y="484.18" width="0.76" height="5.22"/><rect x="1242.79" y="484.18" width="0.76" height="5.22"/><rect x="1243.55" y="479.66" width="0.76" height="9.74"/><rect x="1244.30" y="484.18" width="0.76" height="5.22"/><rect x="1245.06" y="475.38" width="0.76" height="14.02"/><rect x="1245.81" y="463.23" width="0.76" height="26.17"/><rect x="1246.57" y="467.19" width="0.76" height="22.21"/><rect x="1247.33" y="455.50" width="0.76" height="33.90"/><rect x="1248.08" y="475.38" width="0.76" height="14.02"/><rect x="1248.84" y="471.23" width="0.76" height="18.17"/><rect x="1249.59" y="463.23" width="0.76" height="26.17"/><rect x="1250.35" y="471.23" width="0.76" height="18.17"/><rect x="1251.10" y="459.34" width="0.76" height="30.06"/><rect x="1251.86" y="455.50" width="0.76" height="33.90"/><rect x="1252.62" y="467.19" width="0.76" height="22.21"/><rect x="1253.37" y="459.34" width="0.76" height="30.06"/><rect x="1254.13" y="467.19" width="0.76" height="22.21"/><rect x="1254.88" y="471.23" width="0.76" height="18.17"/><rect x="1255.64" y="475.38" width="0.76" height="14.02"/><rect x="1257.15" y="463.23" width="0.76" height="26.17"/><rect x="1258.66" y="459.34" width="0.76" height="30.06"/><rect x="1259.42" y="475.38" width="0.76" height="14.02"/><rect x="1260.17" y="471.23" width="0.76" height="18.17"/><rect x="1260.93" y="479.66" width="0.76" height="9.74"/><rect x="1261.69" y="484.18" width="0.76" height="5.22"/><rect x="1262.44" y="475.38" width="0.76" height="14.02"/><rect x="1263.95" y="484.18" width="0.76" height="5.22"/><rect x="1264.71" y="475.38" width="0.76" height="14.02"/><rect x="1265.46" y="475.38" width="0.76" height="14.02"/><rect x="1266.22" y="484.18" width="0.76" height="5.22"/><rect x="1267.73" y="484.18" width="0.76" height="5.22"/><rect x="1268.49" y="484.18" width="0.76" height="5.22"/><rect x="1270.00" y="479.66" width="0.76" height="9.74"/><rect x="1272.27" y="479.66" width="0.76" height="9.74"/><rect x="1273.02" y="479.66" width="0.76" height="9.74"/><rect x="1273.78" y="475.38" width="0.76" height="14.02"/><rect x="1275.29" y="479.66" width="0.76" height="9.74"/><rect x="1276.80" y="484.18" width="0.76" height="5.22"/><rect x="1305.52" y="484.18" width="0.76" height="5.22"/></g>
<rect x="1236" y="452.5" width="74.79999999999995" height="36.89999999999998" fill="none" stroke="#4a4a4a" stroke-width="0.5"/>
<text x="1273.4" y="450.9" font-family="Liberation Sans" font-size="5.2" text-anchor="middle" fill="#222">HAD</text>
<text x="1239.7" y="495.0" font-family="Liberation Sans" font-size="4.4" text-anchor="middle" fill="#333">0</text>
<text x="1264.4" y="495.0" font-family="Liberation Sans" font-size="4.4" text-anchor="middle" fill="#333">20</text>
<text x="1289.1" y="495.0" font-family="Liberation Sans" font-size="4.4" text-anchor="middle" fill="#333">40</text>
<text x="1234.0" y="490.9" font-family="Liberation Sans" font-size="4.2" text-anchor="end" fill="#333">0</text>
<text x="1234.0" y="476.3" font-family="Liberation Sans" font-size="4.2" text-anchor="end" fill="#333">5</text>
<text x="1234.0" y="461.7" font-family="Liberation Sans" font-size="4.2" text-anchor="end" fill="#333">10</text>
<g fill="#a9aef5"><rect x="1328.81" y="481.44" width="0.75" height="7.96"/><rect x="1330.31" y="481.44" width="0.75" height="7.96"/><rect x="1331.06" y="481.44" width="0.75" height="7.96"/><rect x="1331.81" y="461.67" width="0.75" height="27.73"/><rect x="1332.56" y="474.54" width="0.75" height="14.86"/><rect x="1334.07" y="481.44" width="0.75" height="7.96"/><rect x="1334.82" y="481.44" width="0.75" height="7.96"/><rect x="1335.57" y="467.99" width="0.75" height="21.41"/><rect x="1337.07" y="474.54" width="0.75" height="14.86"/><rect x="1337.83" y="481.44" width="0.75" height="7.96"/><rect x="1338.58" y="467.99" width="0.75" height="21.41"/><rect x="1340.08" y="474.54" width="0.75" height="14.86"/><rect x="1340.83" y="481.44" width="0.75" height="7.96"/><rect x="1341.58" y="481.44" width="0.75" height="7.96"/><rect x="1342.33" y="474.54" width="0.75" height="14.86"/><rect x="1343.84" y="481.44" width="0.75" height="7.96"/><rect x="1344.59" y="474.54" width="0.75" height="14.86"/><rect x="1346.09" y="467.99" width="0.75" height="21.41"/><rect x="1346.84" y="467.99" width="0.75" height="21.41"/><rect x="1348.35" y="461.67" width="0.75" height="27.73"/><rect x="1349.10" y="461.67" width="0.75" height="27.73"/><rect x="1349.85" y="461.67" width="0.75" height="27.73"/><rect x="1350.60" y="481.44" width="0.75" height="7.96"/><rect x="1351.35" y="461.67" width="0.75" height="27.73"/><rect x="1352.11" y="467.99" width="0.75" height="21.41"/><rect x="1352.86" y="474.54" width="0.75" height="14.86"/><rect x="1353.61" y="461.67" width="0.75" height="27.73"/><rect x="1355.86" y="467.99" width="0.75" height="21.41"/><rect x="1356.61" y="481.44" width="0.75" height="7.96"/><rect x="1357.37" y="467.99" width="0.75" height="21.41"/><rect x="1358.87" y="481.44" width="0.75" height="7.96"/><rect x="1359.62" y="455.50" width="0.75" height="33.90"/><rect x="1360.37" y="474.54" width="0.75" height="14.86"/><rect x="1361.12" y="455.50" width="0.75" height="33.90"/><rect x="1361.88" y="467.99" width="0.75" height="21.41"/><rect x="1362.63" y="467.99" width="0.75" height="21.41"/><rect x="1363.38" y="481.44" width="0.75" height="7.96"/><rect x="1364.88" y="461.67" width="0.75" height="27.73"/><rect x="1366.39" y="455.50" width="0.75" height="33.90"/><rect x="1367.14" y="467.99" width="0.75" height="21.41"/><rect x="1367.89" y="455.50" width="0.75" height="33.90"/><rect x="1369.39" y="461.67" width="0.75" height="27.73"/><rect x="1370.14" y="481.44" width="0.75" height="7.96"/><rect x="1370.89" y="474.54" width="0.75" height="14.86"/><rect x="1371.65" y="474.54" width="0.75" height="14.86"/><rect x="1372.40" y="474.54" width="0.75" height="14.86"/><rect x="1373.15" y="481.44" width="0.75" height="7.96"/><rect x="1373.90" y="481.44" width="0.75" height="7.96"/><rect x="1375.40" y="467.99" width="0.75" height="21.41"/><rect x="1377.66" y="467.99" width="0.75" height="21.41"/><rect x="1378.41" y="481.44" width="0.75" height="7.96"/><rect x="1379.16" y="467.99" width="0.75" height="21.41"/><rect x="1379.91" y="481.44" width="0.75" height="7.96"/><rect x="1382.17" y="481.44" width="0.75" height="7.96"/><rect x="1382.92" y="467.99" width="0.75" height="21.41"/><rect x="1383.67" y="481.44" width="0.75" height="7.96"/><rect x="1384.42" y="481.44" width="0.75" height="7.96"/><rect x="1385.93" y="481.44" width="0.75" height="7.96"/><rect x="1386.68" y="481.44" width="0.75" height="7.96"/><rect x="1388.18" y="481.44" width="0.75" height="7.96"/><rect x="1388.93" y="467.99" width="0.75" height="21.41"/><rect x="1389.68" y="481.44" width="0.75" height="7.96"/><rect x="1390.44" y="467.99" width="0.75" height="21.41"/><rect x="1391.94" y="481.44" width="0.75" height="7.96"/><rect x="1393.44" y="481.44" width="0.75" height="7.96"/><rect x="1394.19" y="481.44" width="0.75" height="7.96"/></g>
<rect x="1324.3" y="452.5" width="74.40000000000009" height="36.89999999999998" fill="none" stroke="#4a4a4a" stroke-width="0.5"/>
<text x="1361.5" y="450.9" font-family="Liberation Sans" font-size="5.2" text-anchor="middle" fill="#222">SGRQ</text>
<text x="1326.5" y="495.0" font-family="Liberation Sans" font-size="4.4" text-anchor="middle" fill="#333">0</text>
<text x="1343.6" y="495.0" font-family="Liberation Sans" font-size="4.4" text-anchor="middle" fill="#333">20</text>
<text x="1361.5" y="495.0" font-family="Liberation Sans" font-size="4.4" text-anchor="middle" fill="#333">40</text>
<text x="1379.4" y="495.0" font-family="Liberation Sans" font-size="4.4" text-anchor="middle" fill="#333">60</text>
<text x="1396.5" y="495.0" font-family="Liberation Sans" font-size="4.4" text-anchor="middle" fill="#333">80</text>
<text x="1322.3" y="490.9" font-family="Liberation Sans" font-size="4.2" text-anchor="end" fill="#333">0</text>
<text x="1322.3" y="480.8" font-family="Liberation Sans" font-size="4.2" text-anchor="end" fill="#333">2</text>
<text x="1322.3" y="470.7" font-family="Liberation Sans" font-size="4.2" text-anchor="end" fill="#333">4</text>
<text x="1322.3" y="460.5" font-family="Liberation Sans" font-size="4.2" text-anchor="end" fill="#333">6</text>
</svg>
<svg style="left:1189px;top:471px" width="9" height="14" viewBox="0 0 9 14"><path d="M0.5 0.5V11L3 9L5 13L6.5 12.3L4.7 8.5H8Z" fill="#fff" stroke="#333" stroke-width="0.8"/></svg>
<!-- thumbnail -->
<div class="a" style="left:1430px;top:135px;width:59px;height:29px;background:#fbfcfe;border:2px solid #1d8fd8"></div>
<svg style="left:1432px;top:137px" width="55" height="25" viewBox="0 0 55 25"><g fill="none" stroke="#c9cbe8" stroke-width="0.5"><rect x="4" y="3" width="10" height="5"/><rect x="17" y="3" width="10" height="5"/><rect x="30" y="3" width="10" height="5"/><rect x="43" y="3" width="10" height="5"/><rect x="4" y="10.5" width="10" height="5"/><rect x="17" y="10.5" width="10" height="5"/><rect x="30" y="10.5" width="10" height="5"/><rect x="43" y="10.5" width="10" height="5"/><rect x="4" y="18" width="10" height="5"/><rect x="17" y="18" width="10" height="5"/><rect x="30" y="18" width="10" height="5"/><rect x="43" y="18" width="10" height="5"/></g>
<g fill="#a9aef2"><rect x="8" y="5" width="4" height="3"/><rect x="20" y="6" width="4" height="2"/><rect x="34" y="5" width="4" height="3"/><rect x="46" y="5.5" width="4" height="2.5"/><rect x="8" y="13" width="3" height="2.5"/><rect x="20" y="13" width="5" height="2.5"/><rect x="33" y="13" width="4" height="2.5"/><rect x="45" y="14" width="5" height="1.5"/><rect x="6" y="20" width="5" height="3"/><rect x="18" y="20" width="2" height="3"/><rect x="31" y="20.5" width="4" height="2.5"/><rect x="45" y="20.5" width="5" height="2.5"/></g></svg>
<!-- lines -->
<div class="a" style="left:1034px;top:690px;width:466px;height:2px;background:#3a474f"></div>
<!-- tabs varexp/plots -->
<div class="a" style="left:1212px;top:693px;width:83px;height:15px;background:#2e3c45"></div>
<div class="t" style="left:1214px;top:696px;font-size:10.2px;color:#dfe2e4">Variable explorer</div>
<div class="a" style="left:1296px;top:691px;width:27px;height:20px;background:#46555e;border-top:2px solid #2a6395"></div>
<div class="t" style="left:1299px;top:697px;font-size:9.4px;color:#e6e9eb">Plots</div>
<div class="a" style="left:1033px;top:712px;width:467px;height:4px;background:#2e3b43"></div>
<!-- history tabbar -->
<svg style="left:1039px;top:722px" width="12" height="10" viewBox="0 0 15 12"><rect x="0.8" y="0.8" width="13.4" height="10.4" rx="1.5" fill="none" stroke="#dfe2e4" stroke-width="1.6"/><path d="M0.8 3.5H6L7.5 1.5H14" fill="none" stroke="#dfe2e4" stroke-width="1.6"/></svg>
<div class="a" style="left:1058px;top:718px;width:49px;height:19px;background:#4b5a63;border-bottom:2px solid #2a6395"></div>
<div class="t" style="left:1061px;top:721px;font-size:10.3px;color:#e6e9eb">history.py</div>
<svg style="left:1483px;top:723px" width="9" height="8" viewBox="0 0 9 8"><g fill="#c9ced1"><rect y="0" width="9" height="2"/><rect y="3" width="9" height="2"/><rect y="6" width="9" height="2"/></g></svg>
<!-- history editor -->
<div class="a" style="left:1036px;top:739px;width:462px;height:39px;border:1px solid #26323a;border-radius:3px"></div>
<div class="a" style="left:1038px;top:741px;width:25px;height:35px;background:#1e2930"></div>
<div class="a" style="left:1067px;top:758px;width:411px;height:15px;background:#2d3a42"></div>
<div class="t m" style="left:1067px;top:742px;font-size:13.4px;line-height:15.62px;color:#dadee1;transform:scaleX(0.88);transform-origin:0 0"><span class="s">data_process.py'</span>, wdir=<span class="s">'D:/PythonRUN/</span>
<span class="s">Obstructive_Pulmonary'</span><span style="background:#2aa830;color:#f5f5f5">)</span></div>
<div class="a" style="left:1484px;top:744px;width:8px;height:5px;border-left:4px solid transparent;border-right:4px solid transparent;border-bottom:4px solid #2b3740"></div>
<div class="a" style="left:1483px;top:752px;width:10px;height:10px;border-radius:5px;background:#5b666d"></div>
<div class="a" style="left:1484px;top:766px;width:8px;height:5px;border-left:4px solid transparent;border-right:4px solid transparent;border-top:4px solid #2b3740"></div>
<!-- history/help tabs -->
<div class="a" style="left:1033px;top:779px;width:467px;height:1px;background:#3a474f"></div>
<div class="a" style="left:1236px;top:780px;width:37px;height:20px;background:#46555e;border-top:2px solid #2a6395"></div>
<div class="t" style="left:1239px;top:786px;font-size:9.8px;color:#e6e9eb">History</div>
<div class="a" style="left:1274px;top:782px;width:26px;height:16px;background:#2e3c45"></div>
<div class="t" style="left:1277px;top:785px;font-size:9.5px;color:#dfe2e4">Help</div>


<!-- ===== status bar ===== -->
<div class="a" style="left:0;top:799px;width:1500px;height:22px;background:#2f3f46"></div>
<svg style="left:896px;top:807px" width="10" height="9" viewBox="0 0 10 9"><path d="M1 3.5L4.5 7.5L9.5 1" fill="none" stroke="#cdd2d5" stroke-width="1.4"/><path d="M2 0.5V2.5M0.5 1.5H3.5" stroke="#cdd2d5" stroke-width="1"/></svg>
<div class="t" style="left:912px;top:806.5px;font-size:10px;color:#d4d8db">LSP Python: ready</div>
<svg style="left:1021px;top:806px" width="10" height="10" viewBox="0 0 10 10"><circle cx="5" cy="5" r="4.2" fill="none" stroke="#cdd2d5" stroke-width="1.3"/><circle cx="5" cy="5" r="1.5" fill="#cdd2d5"/><path d="M5 1V3.5M1.5 7L3.7 5.8M8.5 7L6.3 5.8" stroke="#cdd2d5" stroke-width="1"/></svg>
<div class="t" style="left:1037px;top:806.5px;font-size:10px;color:#d4d8db">conda: base (Python 3.8.5)</div>
<div class="t" style="left:1187px;top:806.5px;font-size:10px;color:#d4d8db">Line 72, Col 30</div>
<div class="t" style="left:1281px;top:806.5px;font-size:10px;color:#d4d8db">UTF-8</div>
<div class="t" style="left:1336px;top:806.5px;font-size:10px;color:#d4d8db">CRLF</div>
<div class="t" style="left:1387px;top:806.5px;font-size:10px;color:#d4d8db">RW</div>
<div class="t" style="left:1434px;top:806.5px;font-size:10px;color:#d4d8db">Mem 80%</div>

</div></body></html>
